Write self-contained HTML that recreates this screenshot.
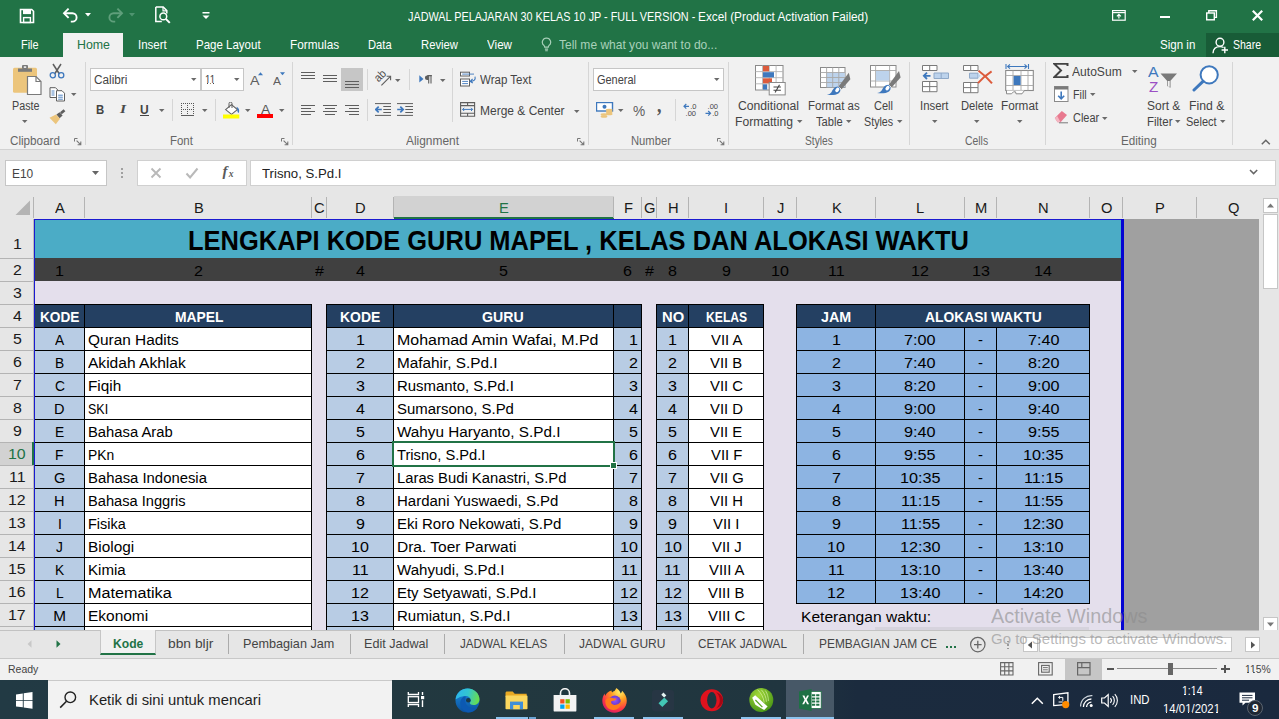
<!DOCTYPE html>
<html><head><meta charset="utf-8"><title>Excel</title>
<style>
html,body{margin:0;padding:0;}
body{width:1279px;height:719px;overflow:hidden;position:relative;background:#e6e6e6;font-family:"Liberation Sans",sans-serif;}
div,svg{position:absolute;box-sizing:border-box;}
.t{white-space:pre;}
</style></head><body>
<div style="left:0px;top:0px;width:1279px;height:57px;background:#217346;"></div>
<div style="left:63px;top:33px;width:60px;height:25px;background:#f1f1f1;"></div>
<div style="left:1206px;top:33px;width:73px;height:24px;background:#185c37;"></div>
<div class="t" style="left:407.5px;top:11px;font-size:12px;line-height:12px;color:#fff;transform:scaleX(0.9038);transform-origin:0 0;">JADWAL PELAJARAN 30 KELAS 10 JP - FULL VERSION -</div>
<div class="t" style="left:698.4px;top:11px;font-size:12px;line-height:12px;color:#fff;transform:scaleX(0.9847);transform-origin:0 0;">Excel (Product Activation Failed)</div>
<div class="t" style="left:20.6px;top:38px;font-size:13px;line-height:13px;color:#fff;transform:scaleX(0.8400);transform-origin:0 0;">File</div>
<div class="t" style="left:76.6px;top:38px;font-size:13px;line-height:13px;color:#217346;transform:scaleX(0.9514);transform-origin:0 0;">Home</div>
<div class="t" style="left:138px;top:38px;font-size:13px;line-height:13px;color:#fff;transform:scaleX(0.8857);transform-origin:0 0;">Insert</div>
<div class="t" style="left:196.4px;top:38px;font-size:13px;line-height:13px;color:#fff;transform:scaleX(0.8847);transform-origin:0 0;">Page Layout</div>
<div class="t" style="left:290.2px;top:38px;font-size:13px;line-height:13px;color:#fff;transform:scaleX(0.9061);transform-origin:0 0;">Formulas</div>
<div class="t" style="left:368.4px;top:38px;font-size:13px;line-height:13px;color:#fff;transform:scaleX(0.8592);transform-origin:0 0;">Data</div>
<div class="t" style="left:421.3px;top:38px;font-size:13px;line-height:13px;color:#fff;transform:scaleX(0.8657);transform-origin:0 0;">Review</div>
<div class="t" style="left:487px;top:38px;font-size:13px;line-height:13px;color:#fff;transform:scaleX(0.8944);transform-origin:0 0;">View</div>
<div class="t" style="left:558.5px;top:38px;font-size:13px;line-height:13px;color:#a9d1ba;transform:scaleX(0.9243);transform-origin:0 0;">Tell me what you want to do...</div>
<div class="t" style="left:1160px;top:38px;font-size:13px;line-height:13px;color:#fff;transform:scaleX(0.8881);transform-origin:0 0;">Sign in</div>
<div class="t" style="left:1232.6px;top:38px;font-size:13px;line-height:13px;color:#fff;transform:scaleX(0.8097);transform-origin:0 0;">Share</div>
<svg style="left:19px;top:8px;" width="16" height="16" viewBox="0 0 16 16"><path d="M1.5 1.5h11.2l1.8 1.8v11.2h-13z" fill="none" stroke="#fff" stroke-width="1.6"/><rect x="4" y="1.5" width="8" height="4.6" fill="#fff"/><rect x="4.6" y="9.6" width="6.8" height="4.9" fill="none" stroke="#fff" stroke-width="1.4"/></svg>
<svg style="left:61px;top:7px;" width="20" height="16" viewBox="0 0 20 16"><path d="M3.2 6.2h8.2a4.2 4.2 0 0 1 0 8.4h-1.6" fill="none" stroke="#fff" stroke-width="1.9"/><path d="M7.6 1.6L3 6.2l4.6 4.6" fill="none" stroke="#fff" stroke-width="1.9"/></svg>
<svg style="left:85px;top:13px;" width="7" height="4" viewBox="0 0 7 4"><path d="M0 0h6l-3 3.4z" fill="#fff"/></svg>
<svg style="left:105px;top:7px;" width="20" height="16" viewBox="0 0 20 16"><path d="M16.8 6.2H8.6a4.2 4.2 0 0 0 0 8.4h1.6" fill="none" stroke="#5f9f7b" stroke-width="1.9"/><path d="M12.4 1.6L17 6.2l-4.6 4.6" fill="none" stroke="#5f9f7b" stroke-width="1.9"/></svg>
<svg style="left:129px;top:13px;" width="7" height="4" viewBox="0 0 7 4"><path d="M0 0h6l-3 3.4z" fill="#4f9470"/></svg>
<svg style="left:154px;top:6px;" width="18" height="18" viewBox="0 0 18 18"><path d="M1.8 1h7.4l3.6 3.6v3M1.8 1v14.6h6" fill="none" stroke="#fff" stroke-width="1.5"/><path d="M9 1v3.8h3.8" fill="none" stroke="#fff" stroke-width="1.2"/><circle cx="9.3" cy="10.4" r="3.4" fill="none" stroke="#fff" stroke-width="1.5"/><path d="M11.8 12.9l4 4" stroke="#fff" stroke-width="2"/></svg>
<svg style="left:202px;top:11px;" width="9" height="9" viewBox="0 0 9 9"><rect x="0.5" y="1" width="7" height="1.5" fill="#fff"/><path d="M0.5 4.5h7l-3.5 3.6z" fill="#fff"/></svg>
<svg style="left:1112px;top:10px;" width="14" height="11" viewBox="0 0 14 11"><rect x="0.6" y="0.6" width="12.6" height="9.6" fill="none" stroke="#fff" stroke-width="1.2"/><path d="M0.6 2.6h12.6" stroke="#fff" stroke-width="1.2"/><path d="M6.9 8.6V4.6M4.9 6.4l2-2 2 2" fill="none" stroke="#fff" stroke-width="1.2"/></svg>
<div style="left:1159.5px;top:16px;width:10.5px;height:1.6px;background:#fff;"></div>
<svg style="left:1206px;top:10px;" width="12" height="11" viewBox="0 0 12 11"><rect x="0.7" y="3" width="7.6" height="6.8" fill="none" stroke="#fff" stroke-width="1.4"/><path d="M2.8 3V0.8h7.6v6.6H8.4" fill="none" stroke="#fff" stroke-width="1.4"/></svg>
<svg style="left:1251.5px;top:9.5px;" width="11" height="11" viewBox="0 0 11 11"><path d="M0.8 0.8l9.4 9.4M10.2 0.8L0.8 10.2" stroke="#fff" stroke-width="2.2"/></svg>
<svg style="left:541px;top:37px;" width="11" height="15" viewBox="0 0 11 15"><path d="M5.5 1a4.2 4.2 0 0 0-2.4 7.6c.4.4.6.9.6 1.6h3.6c0-.7.2-1.2.6-1.6A4.2 4.2 0 0 0 5.500 1z" fill="none" stroke="#a9d1ba" stroke-width="1.2"/><path d="M3.9 12.1h3.2M4.2 13.8h2.6" stroke="#a9d1ba" stroke-width="1.1"/></svg>
<svg style="left:1212px;top:36.5px;" width="17" height="17" viewBox="0 0 17 17"><circle cx="8" cy="5.200" r="3.900" fill="none" stroke="#fff" stroke-width="1.400"/><path d="M1 16.200c0.200-4.200 2.800-6.600 7-6.600 1.400 0 2.600 0.300 3.600 0.900" fill="none" stroke="#fff" stroke-width="1.400"/><path d="M12.800 9.800v6.400M9.600 13h6.400" stroke="#fff" stroke-width="1.400"/></svg>
<div style="left:0px;top:57px;width:1279px;height:92px;background:#f1f1f1;"></div>
<div style="left:0px;top:149px;width:1279px;height:1px;background:#d2d2d2;"></div>
<div style="left:5px;top:160px;width:102px;height:26px;background:#fff;border:1px solid #c6c6c6;"></div>
<div class="t" style="left:12.3px;top:168px;font-size:12px;line-height:12px;color:#444;transform:scaleX(0.9925);transform-origin:0 0;">E10</div>
<svg style="left:92px;top:171px;" width="8" height="5" viewBox="0 0 8 5"><path d="M0 0h7l-3.5 4z" fill="#666"/></svg>
<div style="left:121px;top:167.5px;width:2px;height:2px;background:#a0a0a0;"></div>
<div style="left:121px;top:171.8px;width:2px;height:2px;background:#a0a0a0;"></div>
<div style="left:121px;top:176px;width:2px;height:2px;background:#a0a0a0;"></div>
<div style="left:137px;top:160px;width:110px;height:26px;background:#fff;border:1px solid #d0d0d0;"></div>
<svg style="left:150px;top:167px;" width="12" height="12" viewBox="0 0 12 12"><path d="M1.5 1.5l9 9M10.5 1.5l-9 9" stroke="#b9b9b9" stroke-width="1.9"/></svg>
<svg style="left:185px;top:167px;" width="14" height="12" viewBox="0 0 14 12"><path d="M1.5 6.5l3.600 4L12.500 1.500" fill="none" stroke="#b9b9b9" stroke-width="2"/></svg>
<div class="t" style="left:222.500px;top:162px;font:italic 700 15px/18px 'Liberation Serif',serif;color:#5a5a5a;">f</div>
<div class="t" style="left:228.800px;top:168px;font:italic 700 9.500px/12px 'Liberation Serif',serif;color:#5a5a5a;">x</div>
<div style="left:250px;top:160px;width:1026px;height:26px;background:#fff;border:1px solid #d0d0d0;"></div>
<div class="t" style="left:262px;top:168px;font-size:12.5px;line-height:12.5px;color:#222;transform:scaleX(1.0563);transform-origin:0 0;">Trisno, S.Pd.I</div>
<svg style="left:1249px;top:169px;" width="10" height="7" viewBox="0 0 10 7"><path d="M1 1l3.600 3.600L8.200 1" fill="none" stroke="#666" stroke-width="1.5"/></svg>
<div style="left:84.9px;top:61.5px;width:1px;height:83px;background:#d6d6d6;"></div>
<div style="left:292.0px;top:61.5px;width:1px;height:83px;background:#d6d6d6;"></div>
<div style="left:588.1px;top:61.5px;width:1px;height:83px;background:#d6d6d6;"></div>
<div style="left:727.9px;top:61.5px;width:1px;height:83px;background:#d6d6d6;"></div>
<div style="left:909.0px;top:61.5px;width:1px;height:83px;background:#d6d6d6;"></div>
<div style="left:1045.1px;top:61.5px;width:1px;height:83px;background:#d6d6d6;"></div>
<div style="left:1232.0px;top:61.5px;width:1px;height:83px;background:#d6d6d6;"></div>
<div class="t" style="left:9.5px;top:135px;font-size:12px;line-height:12px;color:#666;transform:scaleX(0.9732);transform-origin:0 0;">Clipboard</div>
<div class="t" style="left:169.6px;top:135px;font-size:12px;line-height:12px;color:#666;transform:scaleX(0.9535);transform-origin:0 0;">Font</div>
<div class="t" style="left:406px;top:135px;font-size:12px;line-height:12px;color:#666;transform:scaleX(0.9930);transform-origin:0 0;">Alignment</div>
<div class="t" style="left:630.8px;top:135px;font-size:12px;line-height:12px;color:#666;transform:scaleX(0.9370);transform-origin:0 0;">Number</div>
<div class="t" style="left:804.5px;top:135px;font-size:12px;line-height:12px;color:#666;transform:scaleX(0.8505);transform-origin:0 0;">Styles</div>
<div class="t" style="left:965.4px;top:135px;font-size:12px;line-height:12px;color:#666;transform:scaleX(0.8661);transform-origin:0 0;">Cells</div>
<div class="t" style="left:1120.7px;top:135px;font-size:12px;line-height:12px;color:#666;transform:scaleX(0.9727);transform-origin:0 0;">Editing</div>
<svg style="left:74px;top:138px;" width="8" height="8" viewBox="0 0 8 8"><path d="M0.500 3.500V0.500h3" fill="none" stroke="#777" stroke-width="1"/><path d="M2.600 2.600l4 4M6.800 3.600v3.200H3.600" fill="none" stroke="#777" stroke-width="1.100"/></svg>
<svg style="left:281px;top:138px;" width="8" height="8" viewBox="0 0 8 8"><path d="M0.500 3.500V0.500h3" fill="none" stroke="#777" stroke-width="1"/><path d="M2.600 2.600l4 4M6.800 3.600v3.200H3.600" fill="none" stroke="#777" stroke-width="1.100"/></svg>
<svg style="left:576.7px;top:138px;" width="8" height="8" viewBox="0 0 8 8"><path d="M0.500 3.500V0.500h3" fill="none" stroke="#777" stroke-width="1"/><path d="M2.600 2.600l4 4M6.800 3.600v3.200H3.600" fill="none" stroke="#777" stroke-width="1.100"/></svg>
<svg style="left:717.3px;top:138px;" width="8" height="8" viewBox="0 0 8 8"><path d="M0.500 3.500V0.500h3" fill="none" stroke="#777" stroke-width="1"/><path d="M2.600 2.600l4 4M6.800 3.600v3.200H3.600" fill="none" stroke="#777" stroke-width="1.100"/></svg>
<svg style="left:1261px;top:138.5px;" width="10" height="6" viewBox="0 0 10 6"><path d="M0.800 5.200l4-4 4 4" fill="none" stroke="#666" stroke-width="1.500"/></svg>
<svg style="left:12px;top:64px;" width="30" height="32" viewBox="0 0 30 32"><rect x="1" y="3.800" width="24" height="25" rx="1.500" fill="#ecc57c"/><path d="M6 4.500h14v3.300H6z" fill="#7a7a7a"/><rect x="10" y="1" width="6" height="4" rx="1" fill="#7a7a7a"/><rect x="11.800" y="2.300" width="2.400" height="1.600" fill="#f1f1f1"/><path d="M15.500 12.500h8.500l5 5v13h-13.500z" fill="#fff" stroke="#7a7a7a" stroke-width="1.200"/><path d="M24 12.500v5h5" fill="none" stroke="#7a7a7a" stroke-width="1.200"/></svg>
<div class="t" style="left:11.5px;top:100px;font-size:12px;line-height:12px;color:#444;transform:scaleX(0.8961);transform-origin:0 0;">Paste</div>
<svg style="left:22px;top:120px;" width="6.0" height="3.5" viewBox="0 0 6.0 3.5"><path d="M0 0h5.5l-2.75 3z" fill="#6a6a6a"/></svg>
<svg style="left:49px;top:63px;" width="16" height="16" viewBox="0 0 16 16"><path d="M4 1l6.400 10M12 1L5.600 11" stroke="#5e5e5e" stroke-width="1.500"/><circle cx="3.800" cy="12.200" r="2.600" fill="none" stroke="#3e78bd" stroke-width="1.300"/><circle cx="12.200" cy="12.200" r="2.600" fill="none" stroke="#3e78bd" stroke-width="1.300"/></svg>
<svg style="left:48.5px;top:87px;" width="17" height="15" viewBox="0 0 17 15"><path d="M1 0.700h5.500l2.300 2.300v7.500H1z" fill="#fff" stroke="#5e5e5e" stroke-width="1"/><path d="M7.500 3.700h5.500l2.500 2.500v7.800h-8z" fill="#fff" stroke="#5e5e5e" stroke-width="1"/><path d="M2.500 4h3M2.500 6h3M2.500 8h3M9.200 8.200h4.600M9.200 10.200h4.600M9.200 12.200h4.600" stroke="#3e78bd" stroke-width="0.900"/></svg>
<svg style="left:71px;top:93px;" width="6.0" height="3.5" viewBox="0 0 6.0 3.5"><path d="M0 0h5.5l-2.75 3z" fill="#6a6a6a"/></svg>
<svg style="left:49px;top:109px;" width="17" height="16" viewBox="0 0 17 16"><path d="M11 3.200l3.600-3 1.800 2-3.600 3z" fill="#5e5e5e"/><path d="M7.400 5.600l3.200-2.400 3 3.400-3 2.600z" fill="#5e5e5e"/><path d="M0.500 8.800l6.500-3.400 4 4.400-4.200 5.400z" fill="#ecc57c"/></svg>
<div style="left:90px;top:68px;width:111px;height:23px;background:#fff;border:1px solid #c6c6c6;"></div>
<div style="left:201px;top:68px;width:43px;height:23px;background:#fff;border:1px solid #c6c6c6;"></div>
<div class="t" style="left:93.5px;top:74px;font-size:12px;line-height:12px;color:#444;transform:scaleX(0.9819);transform-origin:0 0;">Calibri</div>
<div class="t" style="left:204.9px;top:74px;font-size:12px;line-height:12px;color:#444;transform:scaleX(0.8100);transform-origin:0 0;">11</div>
<div style="left:205.09px;top:83px;width:2.09px;height:1.3px;background:#fff;"></div>
<div style="left:208.4px;top:83px;width:1.94px;height:1.3px;background:#fff;"></div>
<div style="left:210.51px;top:83px;width:2.09px;height:1.3px;background:#fff;"></div>
<div style="left:213.82px;top:83px;width:1.94px;height:1.3px;background:#fff;"></div>
<svg style="left:191px;top:78px;" width="6.0" height="3.5" viewBox="0 0 6.0 3.5"><path d="M0 0h5.5l-2.75 3z" fill="#6a6a6a"/></svg>
<svg style="left:233.6px;top:78px;" width="6.0" height="3.5" viewBox="0 0 6.0 3.5"><path d="M0 0h5.5l-2.75 3z" fill="#6a6a6a"/></svg>
<div class="t" style="left:250px;top:74px;font-size:13.5px;line-height:13.5px;color:#5e5e5e;transform:scaleX(1.0537);transform-origin:0 0;">A</div>
<svg style="left:258px;top:72px;" width="6" height="4" viewBox="0 0 6 4"><path d="M0 3.200h5L2.500 0.300z" fill="#3e78bd"/></svg>
<div class="t" style="left:273px;top:76px;font-size:11px;line-height:11px;color:#5e5e5e;transform:scaleX(1.0894);transform-origin:0 0;">A</div>
<svg style="left:280px;top:72px;" width="6" height="4" viewBox="0 0 6 4"><path d="M0 0.300h5L2.500 3.200z" fill="#3e78bd"/></svg>
<div class="t" style="left:96.2px;top:103px;font-size:13px;line-height:13px;color:#444;transform:scaleX(0.8732);transform-origin:0 0;font-weight:700;">B</div>
<div class="t" style="left:119.800px;top:101px;font:italic 700 13.500px/16px 'Liberation Serif',serif;color:#4a4a4a;transform:scaleX(1.15);transform-origin:0 0;">I</div>
<div class="t" style="left:140px;top:104px;font-size:12.5px;line-height:12.5px;color:#444;transform:scaleX(0.9633);transform-origin:0 0;font-weight:700;">U</div>
<div style="left:140px;top:115px;width:8.7px;height:1.2px;background:#444;"></div>
<svg style="left:158.6px;top:109px;" width="6.0" height="3.5" viewBox="0 0 6.0 3.5"><path d="M0 0h5.5l-2.75 3z" fill="#6a6a6a"/></svg>
<div style="left:172px;top:99px;width:1px;height:21.5px;background:#d6d6d6;"></div>
<svg style="left:181px;top:103px;" width="14" height="13" viewBox="0 0 14 13"><g fill="#555" shape-rendering="crispEdges"><rect x="0" y="0" width="1" height="1"/><rect x="0" y="2" width="1" height="1"/><rect x="0" y="4" width="1" height="1"/><rect x="0" y="6" width="1" height="1"/><rect x="0" y="8" width="1" height="1"/><rect x="0" y="10" width="1" height="1"/><rect x="2" y="0" width="1" height="1"/><rect x="2" y="6" width="1" height="1"/><rect x="4" y="0" width="1" height="1"/><rect x="4" y="6" width="1" height="1"/><rect x="6" y="0" width="1" height="1"/><rect x="6" y="2" width="1" height="1"/><rect x="6" y="4" width="1" height="1"/><rect x="6" y="6" width="1" height="1"/><rect x="6" y="8" width="1" height="1"/><rect x="6" y="10" width="1" height="1"/><rect x="8" y="0" width="1" height="1"/><rect x="8" y="6" width="1" height="1"/><rect x="10" y="0" width="1" height="1"/><rect x="10" y="6" width="1" height="1"/><rect x="12" y="0" width="1" height="1"/><rect x="12" y="2" width="1" height="1"/><rect x="12" y="4" width="1" height="1"/><rect x="12" y="6" width="1" height="1"/><rect x="12" y="8" width="1" height="1"/><rect x="12" y="10" width="1" height="1"/><rect x="0" y="12" width="13" height="1.200" fill="#5e5e5e"/></g></svg>
<svg style="left:201.6px;top:109px;" width="6.0" height="3.5" viewBox="0 0 6.0 3.5"><path d="M0 0h5.5l-2.75 3z" fill="#6a6a6a"/></svg>
<div style="left:215px;top:99px;width:1px;height:21.5px;background:#d6d6d6;"></div>
<svg style="left:222.8px;top:101.5px;" width="17" height="17" viewBox="0 0 17 17"><path d="M2.600 7.600l5.900-5 5.900 5-5.900 4.800z" fill="#fff" stroke="#5e5e5e" stroke-width="1.100"/><path d="M6 6V1.600a1.500 1.500 0 0 1 3 0V6" fill="none" stroke="#5e5e5e" stroke-width="1"/><path d="M13.400 4.800c2.600 1.200 3.400 3.600 2.400 6.200-1.200-0.600-1.800-2.200-1.400-3.600z" fill="#3e78bd"/><rect x="0" y="12.500" width="16.300" height="4" fill="#ffff00"/></svg>
<svg style="left:244.6px;top:109px;" width="6.0" height="3.5" viewBox="0 0 6.0 3.5"><path d="M0 0h5.5l-2.75 3z" fill="#6a6a6a"/></svg>
<div class="t" style="left:260.7px;top:103px;font-size:13.5px;line-height:13.5px;color:#555;transform:scaleX(1.0205);transform-origin:0 0;">A</div>
<div style="left:257px;top:114px;width:16px;height:4px;background:#ff0000;"></div>
<svg style="left:278.8px;top:109px;" width="6.0" height="3.5" viewBox="0 0 6.0 3.5"><path d="M0 0h5.5l-2.75 3z" fill="#6a6a6a"/></svg>
<div style="left:301px;top:71.5px;width:14px;height:1.1px;background:#5e5e5e;"></div>
<div style="left:301px;top:74.5px;width:14px;height:1.1px;background:#5e5e5e;"></div>
<div style="left:301px;top:77.5px;width:14px;height:1.1px;background:#5e5e5e;"></div>
<div style="left:323px;top:75.0px;width:14px;height:1.1px;background:#5e5e5e;"></div>
<div style="left:323px;top:78.0px;width:14px;height:1.1px;background:#5e5e5e;"></div>
<div style="left:323px;top:81.0px;width:14px;height:1.1px;background:#5e5e5e;"></div>
<div style="left:341px;top:68px;width:22px;height:23px;background:#c6c6c6;"></div>
<div style="left:345px;top:80.5px;width:14px;height:1.1px;background:#5e5e5e;"></div>
<div style="left:345px;top:83.5px;width:14px;height:1.1px;background:#5e5e5e;"></div>
<div style="left:345px;top:86.5px;width:14px;height:1.1px;background:#5e5e5e;"></div>
<div style="left:367px;top:68.5px;width:1px;height:21.5px;background:#d6d6d6;"></div>
<svg style="left:374px;top:70px;" width="18" height="17" viewBox="0 0 18 17"><text x="0" y="0" font-family="Liberation Sans" font-size="11.500" fill="#4a4a4a" transform="translate(4.600 12.600) rotate(-45) scale(0.92 1)">ab</text><path d="M7.400 15.400L16.400 6.400" stroke="#5e5e5e" stroke-width="1.100"/><path d="M12.600 6.200h4v4" fill="none" stroke="#5e5e5e" stroke-width="1.100"/></svg>
<svg style="left:395px;top:79px;" width="6.0" height="3.5" viewBox="0 0 6.0 3.5"><path d="M0 0h5.5l-2.75 3z" fill="#6a6a6a"/></svg>
<div style="left:409.2px;top:68.5px;width:1px;height:21.5px;background:#d6d6d6;"></div>
<svg style="left:418.5px;top:74.5px;" width="14" height="9" viewBox="0 0 14 9"><path d="M0.300 0.200v7.400l4.200-3.700z" fill="#3e78bd"/><path d="M8.300 0.600h4.600M9.700 0.600v8M12 0.600v8" stroke="#5e5e5e" stroke-width="1.100" fill="none"/><path d="M9.700 0.400H8.200a2.300 2.300 0 0 0 0 4.600H9.700z" fill="#5e5e5e"/></svg>
<svg style="left:439.5px;top:79px;" width="6.0" height="3.5" viewBox="0 0 6.0 3.5"><path d="M0 0h5.5l-2.75 3z" fill="#6a6a6a"/></svg>
<div style="left:452px;top:67.5px;width:1px;height:54px;background:#d6d6d6;"></div>
<svg style="left:460px;top:70.5px;" width="17" height="16" viewBox="0 0 17 16"><rect x="0.500" y="1.200" width="9" height="3.800" fill="#fff" stroke="#5e5e5e" stroke-width="1"/><rect x="0.500" y="8" width="9" height="7" fill="#fff" stroke="#5e5e5e" stroke-width="1"/><path d="M2.200 3.100H14M2.200 10.400h5.800M2.200 12.600h5.800" stroke="#3e78bd" stroke-width="0.900"/><path d="M15 5.600c0.800 3-1 4.800-4.600 4.800M12.600 8l-2.400 2.400 2.600 1.600" fill="none" stroke="#3e78bd" stroke-width="1.100"/></svg>
<div class="t" style="left:479.6px;top:74px;font-size:12px;line-height:12px;color:#444;transform:scaleX(0.9593);transform-origin:0 0;">Wrap Text</div>
<div style="left:301px;top:105.0px;width:14px;height:1.1px;background:#5e5e5e;"></div>
<div style="left:301px;top:108.0px;width:10px;height:1.1px;background:#5e5e5e;"></div>
<div style="left:301px;top:111.0px;width:14px;height:1.1px;background:#5e5e5e;"></div>
<div style="left:301px;top:114.0px;width:10px;height:1.1px;background:#5e5e5e;"></div>
<div style="left:323.0px;top:105.0px;width:14px;height:1.1px;background:#5e5e5e;"></div>
<div style="left:325.0px;top:108.0px;width:10px;height:1.1px;background:#5e5e5e;"></div>
<div style="left:323.0px;top:111.0px;width:14px;height:1.1px;background:#5e5e5e;"></div>
<div style="left:325.0px;top:114.0px;width:10px;height:1.1px;background:#5e5e5e;"></div>
<div style="left:345px;top:105.0px;width:14px;height:1.1px;background:#5e5e5e;"></div>
<div style="left:349px;top:108.0px;width:10px;height:1.1px;background:#5e5e5e;"></div>
<div style="left:345px;top:111.0px;width:14px;height:1.1px;background:#5e5e5e;"></div>
<div style="left:349px;top:114.0px;width:10px;height:1.1px;background:#5e5e5e;"></div>
<div style="left:367px;top:99px;width:1px;height:22px;background:#d6d6d6;"></div>
<svg style="left:375px;top:103px;" width="17" height="13" viewBox="0 0 17 13"><path d="M0 0.600h16M8.300 3.500h7.700M8.300 6.500h7.700M8.300 9.500h7.700M0 12.400h16" stroke="#5e5e5e" stroke-width="1"/><path d="M6.800 6.500H1.400M3.700 3.600L0.800 6.500l2.900 2.900" fill="none" stroke="#3e78bd" stroke-width="1.700"/></svg>
<svg style="left:397px;top:103px;" width="17" height="13" viewBox="0 0 17 13"><path d="M0 0.600h16M8.300 3.500h7.700M8.300 6.500h7.700M8.300 9.500h7.700M0 12.400h16" stroke="#5e5e5e" stroke-width="1"/><path d="M0.200 6.500h5.400M3.300 3.600l2.900 2.900-2.900 2.900" fill="none" stroke="#3e78bd" stroke-width="1.700"/></svg>
<svg style="left:460px;top:102px;" width="16" height="15" viewBox="0 0 16 15"><path d="M0.600 0.600h14v13.600H0.600zM0.600 3.600h14M0.600 11.200h14M7.600 0.600v3M7.600 11.200v3" fill="none" stroke="#5e5e5e" stroke-width="1.100"/><path d="M2.600 7.400h10M4.200 5.800L2.600 7.400l1.600 1.600M11 5.800l1.600 1.600-1.600 1.600" fill="none" stroke="#3e78bd" stroke-width="1"/></svg>
<div class="t" style="left:479.6px;top:105px;font-size:12px;line-height:12px;color:#444;transform:scaleX(0.9988);transform-origin:0 0;">Merge &amp; Center</div>
<svg style="left:574.2px;top:110px;" width="6.0" height="3.5" viewBox="0 0 6.0 3.5"><path d="M0 0h5.5l-2.75 3z" fill="#6a6a6a"/></svg>
<div style="left:593px;top:68px;width:131px;height:23px;background:#fff;border:1px solid #c6c6c6;"></div>
<div class="t" style="left:596.8px;top:74px;font-size:12px;line-height:12px;color:#444;transform:scaleX(0.9133);transform-origin:0 0;">General</div>
<svg style="left:713.7px;top:78px;" width="6.0" height="3.5" viewBox="0 0 6.0 3.5"><path d="M0 0h5.5l-2.75 3z" fill="#6a6a6a"/></svg>
<svg style="left:595.5px;top:102px;" width="18" height="17" viewBox="0 0 18 17"><rect x="0.500" y="0.500" width="16" height="8.500" fill="#fff" stroke="#3e78bd" stroke-width="1.400"/><circle cx="8.500" cy="4.800" r="2" fill="#3e78bd"/><ellipse cx="13.200" cy="8" rx="3.400" ry="1.300" fill="#ecc57c"/><ellipse cx="13.200" cy="10" rx="3.400" ry="1.300" fill="#ecc57c"/><ellipse cx="13.200" cy="12" rx="3.400" ry="1.300" fill="#ecc57c"/><ellipse cx="8" cy="12.500" rx="3.400" ry="1.300" fill="#ecc57c"/><ellipse cx="8" cy="14.500" rx="3.400" ry="1.300" fill="#ecc57c"/></svg>
<svg style="left:618px;top:109px;" width="6.0" height="3.5" viewBox="0 0 6.0 3.5"><path d="M0 0h5.5l-2.75 3z" fill="#6a6a6a"/></svg>
<div class="t" style="left:632.6px;top:104px;font-size:14.5px;line-height:14.5px;color:#5e5e5e;transform:scaleX(0.9453);transform-origin:0 0;">%</div>
<div class="t" style="left:657px;top:94px;font-size:22px;line-height:22px;color:#555;transform:scaleX(0.8163);transform-origin:0 0;font-weight:700;font-family:'Liberation Serif',serif;">,</div>
<div style="left:675px;top:99px;width:1px;height:22px;background:#d6d6d6;"></div>
<svg style="left:683px;top:103px;" width="15" height="14" viewBox="0 0 15 14"><path d="M6 3.300H1M3.300 1L1 3.300l2.300 2.300" fill="none" stroke="#3e78bd" stroke-width="1.200"/><text x="7.200" y="6" font-family="Liberation Sans" font-size="7.500" fill="#444">.0</text><text x="2.600" y="13" font-family="Liberation Sans" font-size="7.500" fill="#444">.00</text></svg>
<svg style="left:705px;top:103px;" width="15" height="14" viewBox="0 0 15 14"><text x="2.600" y="6" font-family="Liberation Sans" font-size="7.500" fill="#444">.00</text><path d="M0.500 10.300h5M3.200 8l2.300 2.300-2.300 2.300" fill="none" stroke="#3e78bd" stroke-width="1.200"/><text x="7.200" y="13" font-family="Liberation Sans" font-size="7.500" fill="#444">.0</text></svg>
<svg style="left:755px;top:64.5px;" width="32" height="31" viewBox="0 0 32 31"><rect x="0.500" y="0.500" width="27.500" height="24.500" fill="#fff" stroke="#8a8a8a" stroke-width="1"/><path d="M7.500 0.500v24.500M14.300 0.500v24.500M21.100 0.500v24.500M0.500 6.600h27.500M0.500 12.700h27.500M0.500 18.800h27.500" stroke="#b4b4b4" stroke-width="0.900"/><rect x="8" y="1" width="6" height="5.300" fill="#dc5b3c"/><rect x="8" y="7.200" width="11" height="5.200" fill="#3e78bd"/><rect x="8" y="13.300" width="9" height="5" fill="#dc5b3c"/><rect x="8" y="19.300" width="4.200" height="5.300" fill="#3e78bd"/><rect x="14.200" y="17.500" width="16" height="12.400" fill="#fff" stroke="#8a8a8a" stroke-width="1"/><path d="M18.500 22h7.400M18.500 25.300h7.400M24.500 19.800l-4.400 7.700" stroke="#444" stroke-width="1.100"/></svg>
<div class="t" style="left:738.4px;top:100px;font-size:12px;line-height:12px;color:#444;transform:scaleX(1.0142);transform-origin:0 0;">Conditional</div>
<div class="t" style="left:735.4px;top:116px;font-size:12px;line-height:12px;color:#444;transform:scaleX(1.0094);transform-origin:0 0;">Formatting</div>
<svg style="left:797px;top:119.8px;" width="6.0" height="3.5" viewBox="0 0 6.0 3.5"><path d="M0 0h5.5l-2.75 3z" fill="#6a6a6a"/></svg>
<svg style="left:820px;top:67px;" width="31" height="29" viewBox="0 0 31 29"><rect x="0.500" y="0.500" width="24.500" height="20" fill="#fff" stroke="#8a8a8a" stroke-width="1"/><rect x="6.800" y="5.600" width="18" height="14.700" fill="#bdd3ec"/><path d="M6.600 0.500v20M12.700 0.500v20M18.800 0.500v20M0.500 5.500h24.500M0.500 10.500h24.500M0.500 15.500h24.500" stroke="#a8a8a8" stroke-width="0.900"/><path d="M28.800 5.800l1.600 6.400-9 10.200-3-2.600z" fill="#7a7a7a"/><path d="M21.400 22.400l-3-2.600" stroke="#fff" stroke-width="1"/><path d="M18 19.600c-3.400 0.200-5 2.600-6.400 5.400-1 1.600-2.800 2.600-4.800 2.800 5 0.400 9.600 0.200 12-1.600 2-1.600 2.600-4.400-0.800-6.600z" fill="#3e78bd"/><ellipse cx="17.300" cy="22.900" rx="1.700" ry="2.500" transform="rotate(40 17.300 22.900)" fill="#fff"/></svg>
<div class="t" style="left:807.5px;top:100px;font-size:12px;line-height:12px;color:#444;transform:scaleX(0.9571);transform-origin:0 0;">Format as</div>
<div class="t" style="left:816.4px;top:116px;font-size:12px;line-height:12px;color:#444;transform:scaleX(0.9272);transform-origin:0 0;">Table</div>
<svg style="left:846px;top:119.8px;" width="6.0" height="3.5" viewBox="0 0 6.0 3.5"><path d="M0 0h5.5l-2.75 3z" fill="#6a6a6a"/></svg>
<svg style="left:870px;top:64.5px;" width="31" height="30" viewBox="0 0 31 30"><rect x="0.500" y="0.500" width="25.500" height="21.500" fill="#fff" stroke="#8a8a8a" stroke-width="1"/><path d="M5.600 0.500v21.500M19.600 0.500v21.500M0.500 5.500h25.500M0.500 16h25.500" stroke="#a8a8a8" stroke-width="0.900"/><rect x="6" y="6" width="13.200" height="9.600" fill="#bdd3ec"/><path d="M29 6l1.600 6.400-9 10.200-3-2.600z" fill="#7a7a7a"/><path d="M21.600 22.600l-3-2.600" stroke="#fff" stroke-width="1"/><path d="M18.200 19.800c-3.400 0.200-5 2.600-6.400 5.400-1 1.600-2.800 2.600-4.800 2.800 5 0.400 9.600 0.200 12-1.600 2-1.600 2.600-4.400-0.800-6.600z" fill="#3e78bd"/><ellipse cx="17.500" cy="23.100" rx="1.700" ry="2.500" transform="rotate(40 17.500 23.100)" fill="#fff"/></svg>
<div class="t" style="left:873.6px;top:100px;font-size:12px;line-height:12px;color:#444;transform:scaleX(0.9191);transform-origin:0 0;">Cell</div>
<div class="t" style="left:864.4px;top:116px;font-size:12px;line-height:12px;color:#444;transform:scaleX(0.8933);transform-origin:0 0;">Styles</div>
<svg style="left:897px;top:119.8px;" width="6.0" height="3.5" viewBox="0 0 6.0 3.5"><path d="M0 0h5.5l-2.75 3z" fill="#6a6a6a"/></svg>
<svg style="left:921.5px;top:65px;" width="28" height="28" viewBox="0 0 28 28"><path d="M0.500 0.500h14.500v5H0.500zM7.700 0.500v5" fill="#fff" stroke="#7a7a7a" stroke-width="1"/><path d="M12 8h14.500v5.500H12zM19.200 8v5.500" fill="#bdd3ec" stroke="#8fa9c8" stroke-width="1"/><path d="M8.500 10.800H2M5 7.600L1.800 10.800 5 14" fill="none" stroke="#3e78bd" stroke-width="1.800"/><path d="M0.500 16.500h14.500v10.200H0.500zM7.700 16.500v10.200M0.500 21.600h14.500" fill="#fff" stroke="#7a7a7a" stroke-width="1"/></svg>
<div class="t" style="left:920.4px;top:100px;font-size:12px;line-height:12px;color:#444;transform:scaleX(0.9495);transform-origin:0 0;">Insert</div>
<svg style="left:932px;top:120.2px;" width="6.0" height="3.5" viewBox="0 0 6.0 3.5"><path d="M0 0h5.5l-2.75 3z" fill="#6a6a6a"/></svg>
<svg style="left:963px;top:65px;" width="31" height="29" viewBox="0 0 31 29"><path d="M0.500 0.500h14.500v5H0.500zM7.700 0.500v5" fill="#fff" stroke="#7a7a7a" stroke-width="1"/><path d="M6.500 8.200h8.500v5H6.500z" fill="#bdd3ec" stroke="#8fa9c8" stroke-width="1"/><path d="M15 8.200l2.600 2.500-2.600 2.500z" fill="#bdd3ec"/><path d="M0.500 17.500h14.500v10.200H0.500zM7.700 17.500v10.200M0.500 22.600h14.500" fill="#fff" stroke="#7a7a7a" stroke-width="1"/><path d="M15.500 5.800C20 9 25 13.600 29 18.400M28.600 6.400C24 9.400 19 13.600 15 18.200" fill="none" stroke="#dc5b3c" stroke-width="2"/></svg>
<div class="t" style="left:960.7px;top:100px;font-size:12px;line-height:12px;color:#444;transform:scaleX(0.9312);transform-origin:0 0;">Delete</div>
<svg style="left:974px;top:120.2px;" width="6.0" height="3.5" viewBox="0 0 6.0 3.5"><path d="M0 0h5.5l-2.75 3z" fill="#6a6a6a"/></svg>
<svg style="left:1004.5px;top:63px;" width="30" height="32" viewBox="0 0 30 32"><path d="M1 1v5M23.500 1v5M2.500 3.500h19.500M5 1.300L2.600 3.500 5 5.700M19.500 1.300l2.400 2.200-2.400 2.200" fill="none" stroke="#3e78bd" stroke-width="1.100"/><rect x="0.700" y="7.500" width="27.600" height="20" fill="#fff" stroke="#8a8a8a" stroke-width="1.100"/><path d="M8 7.500v20M16 7.500v20M23 7.500v20M0.700 12.500h27.600M0.700 22.500h27.600" stroke="#a8a8a8" stroke-width="0.900"/><rect x="8.600" y="13" width="7" height="9" fill="#3e78bd"/><path d="M1.500 27.500v3.300h5l2-2h2l0.500 2h6l2.500-3.300" fill="#fff" stroke="#8a8a8a" stroke-width="1"/></svg>
<div class="t" style="left:1000.8px;top:100px;font-size:12px;line-height:12px;color:#444;transform:scaleX(0.9785);transform-origin:0 0;">Format</div>
<svg style="left:1017px;top:120.2px;" width="6.0" height="3.5" viewBox="0 0 6.0 3.5"><path d="M0 0h5.5l-2.75 3z" fill="#6a6a6a"/></svg>
<svg style="left:1053px;top:63px;" width="16" height="15" viewBox="0 0 16 15"><path d="M14.500 3V0.800H1.200L8 7.400 1.200 14.200h13.300V12" fill="none" stroke="#444" stroke-width="2"/></svg>
<div class="t" style="left:1072px;top:66px;font-size:12px;line-height:12px;color:#444;transform:scaleX(1.0069);transform-origin:0 0;">AutoSum</div>
<svg style="left:1132px;top:70.2px;" width="6.0" height="3.5" viewBox="0 0 6.0 3.5"><path d="M0 0h5.5l-2.75 3z" fill="#6a6a6a"/></svg>
<svg style="left:1054px;top:86px;" width="15" height="16" viewBox="0 0 15 16"><rect x="0.500" y="0.500" width="13.500" height="15" fill="#fff" stroke="#8a8a8a" stroke-width="1"/><rect x="0.500" y="0.500" width="13.500" height="3" fill="#7a7a7a"/><path d="M7.200 5.500v7M4.200 9.800l3 3 3-3" fill="none" stroke="#3e78bd" stroke-width="1.600"/></svg>
<div class="t" style="left:1072.7px;top:89px;font-size:12px;line-height:12px;color:#444;transform:scaleX(0.8938);transform-origin:0 0;">Fill</div>
<svg style="left:1090px;top:93.2px;" width="6.0" height="3.5" viewBox="0 0 6.0 3.5"><path d="M0 0h5.5l-2.75 3z" fill="#6a6a6a"/></svg>
<svg style="left:1054px;top:110px;" width="15" height="14" viewBox="0 0 15 14"><path d="M0.800 8l7-7 5.200 4-6.400 7.200h-3z" fill="#e8798f"/><path d="M0.800 8l2.800 4.200h3L3.200 6z" fill="#f4b6c2"/><path d="M5 12.800h9" stroke="#7a7a7a" stroke-width="1"/></svg>
<div class="t" style="left:1072.7px;top:112px;font-size:12px;line-height:12px;color:#444;transform:scaleX(0.9133);transform-origin:0 0;">Clear</div>
<svg style="left:1101.7px;top:116.7px;" width="6.0" height="3.5" viewBox="0 0 6.0 3.5"><path d="M0 0h5.5l-2.75 3z" fill="#6a6a6a"/></svg>
<div class="t" style="left:1148.4px;top:64px;font-size:15px;line-height:15px;color:#3e78bd;transform:scaleX(1.0583);transform-origin:0 0;">A</div>
<div class="t" style="left:1149px;top:79px;font-size:15px;line-height:15px;color:#9b4fc4;transform:scaleX(1.0140);transform-origin:0 0;">Z</div>
<svg style="left:1160px;top:73px;" width="18" height="16" viewBox="0 0 18 16"><path d="M0.500 0.500h16.500l-6.500 7.200v7l-3.500-1.600v-5.400z" fill="#7a7a7a"/><rect x="7.700" y="8" width="2" height="5.800" fill="#f1f1f1"/></svg>
<div class="t" style="left:1146.5px;top:100px;font-size:12px;line-height:12px;color:#444;transform:scaleX(0.9982);transform-origin:0 0;">Sort &amp;</div>
<div class="t" style="left:1146.5px;top:116px;font-size:12px;line-height:12px;color:#444;transform:scaleX(0.9561);transform-origin:0 0;">Filter</div>
<svg style="left:1174.6px;top:120px;" width="6.0" height="3.5" viewBox="0 0 6.0 3.5"><path d="M0 0h5.5l-2.75 3z" fill="#6a6a6a"/></svg>
<svg style="left:1192px;top:64px;" width="28" height="28" viewBox="0 0 28 28"><circle cx="17.200" cy="10.800" r="8.600" fill="#fff" stroke="#3e78bd" stroke-width="2"/><path d="M11 17.400L2 26" stroke="#3e78bd" stroke-width="3" stroke-linecap="round"/></svg>
<div class="t" style="left:1188.6px;top:100px;font-size:12px;line-height:12px;color:#444;transform:scaleX(1.0205);transform-origin:0 0;">Find &amp;</div>
<div class="t" style="left:1186.4px;top:116px;font-size:12px;line-height:12px;color:#444;transform:scaleX(0.9173);transform-origin:0 0;">Select</div>
<svg style="left:1219.8px;top:120px;" width="6.0" height="3.5" viewBox="0 0 6.0 3.5"><path d="M0 0h5.5l-2.75 3z" fill="#6a6a6a"/></svg>
<div style="left:0px;top:195px;width:1279px;height:435px;background:#e6e6e6;"></div>
<svg style="left:15px;top:200px;" width="16" height="16" viewBox="0 0 16 16"><path d="M15 0.5V15H0.5z" fill="#b4b4b4"/></svg>
<div style="left:393.5px;top:196px;width:220.5px;height:23px;background:#d2d2d2;border-bottom:2px solid #217346;"></div>
<div class="t" style="left:55.08671875px;top:200px;font-size:15.5px;line-height:15.5px;color:#1a1a1a;transform:scaleX(0.9500);transform-origin:0 0;">A</div>
<div style="left:84px;top:197px;width:1px;height:21px;background:#b4b4b4;"></div>
<div class="t" style="left:193.58671875px;top:200px;font-size:15.5px;line-height:15.5px;color:#1a1a1a;transform:scaleX(0.9500);transform-origin:0 0;">B</div>
<div style="left:311px;top:197px;width:1px;height:21px;background:#b4b4b4;"></div>
<div class="t" style="left:314.178515625px;top:200px;font-size:15.5px;line-height:15.5px;color:#1a1a1a;transform:scaleX(0.9500);transform-origin:0 0;">C</div>
<div style="left:326px;top:197px;width:1px;height:21px;background:#b4b4b4;"></div>
<div class="t" style="left:355.178515625px;top:200px;font-size:15.5px;line-height:15.5px;color:#1a1a1a;transform:scaleX(0.9500);transform-origin:0 0;">D</div>
<div style="left:393px;top:197px;width:1px;height:21px;background:#b4b4b4;"></div>
<div class="t" style="left:499.08671875px;top:200px;font-size:15.5px;line-height:15.5px;color:#217346;transform:scaleX(0.9500);transform-origin:0 0;">E</div>
<div style="left:613px;top:197px;width:1px;height:21px;background:#b4b4b4;"></div>
<div class="t" style="left:623.50234375px;top:200px;font-size:15.5px;line-height:15.5px;color:#1a1a1a;transform:scaleX(0.9500);transform-origin:0 0;">F</div>
<div style="left:641px;top:197px;width:1px;height:21px;background:#b4b4b4;"></div>
<div class="t" style="left:643.7703125px;top:200px;font-size:15.5px;line-height:15.5px;color:#1a1a1a;transform:scaleX(0.9500);transform-origin:0 0;">G</div>
<div style="left:656px;top:197px;width:1px;height:21px;background:#b4b4b4;"></div>
<div class="t" style="left:667.678515625px;top:200px;font-size:15.5px;line-height:15.5px;color:#1a1a1a;transform:scaleX(0.9500);transform-origin:0 0;">H</div>
<div style="left:688px;top:197px;width:1px;height:21px;background:#b4b4b4;"></div>
<div class="t" style="left:724.4515625px;top:200px;font-size:15.5px;line-height:15.5px;color:#1a1a1a;transform:scaleX(0.9500);transform-origin:0 0;">I</div>
<div style="left:763px;top:197px;width:1px;height:21px;background:#b4b4b4;"></div>
<div class="t" style="left:776.81875px;top:200px;font-size:15.5px;line-height:15.5px;color:#1a1a1a;transform:scaleX(0.9500);transform-origin:0 0;">J</div>
<div style="left:796px;top:197px;width:1px;height:21px;background:#b4b4b4;"></div>
<div class="t" style="left:831.58671875px;top:200px;font-size:15.5px;line-height:15.5px;color:#1a1a1a;transform:scaleX(0.9500);transform-origin:0 0;">K</div>
<div style="left:875px;top:197px;width:1px;height:21px;background:#b4b4b4;"></div>
<div class="t" style="left:916.403125px;top:200px;font-size:15.5px;line-height:15.5px;color:#1a1a1a;transform:scaleX(0.9500);transform-origin:0 0;">L</div>
<div style="left:964px;top:197px;width:1px;height:21px;background:#b4b4b4;"></div>
<div class="t" style="left:974.862109375px;top:200px;font-size:15.5px;line-height:15.5px;color:#1a1a1a;transform:scaleX(0.9500);transform-origin:0 0;">M</div>
<div style="left:996px;top:197px;width:1px;height:21px;background:#b4b4b4;"></div>
<div class="t" style="left:1038.178515625px;top:200px;font-size:15.5px;line-height:15.5px;color:#1a1a1a;transform:scaleX(0.9500);transform-origin:0 0;">N</div>
<div style="left:1089px;top:197px;width:1px;height:21px;background:#b4b4b4;"></div>
<div class="t" style="left:1100.7703125px;top:200px;font-size:15.5px;line-height:15.5px;color:#1a1a1a;transform:scaleX(0.9500);transform-origin:0 0;">O</div>
<div style="left:1122px;top:197px;width:1px;height:21px;background:#b4b4b4;"></div>
<div class="t" style="left:1155.08671875px;top:200px;font-size:15.5px;line-height:15.5px;color:#1a1a1a;transform:scaleX(0.9500);transform-origin:0 0;">P</div>
<div style="left:1196px;top:197px;width:1px;height:21px;background:#b4b4b4;"></div>
<div class="t" style="left:1228.2703125px;top:200px;font-size:15.5px;line-height:15.5px;color:#1a1a1a;transform:scaleX(0.9500);transform-origin:0 0;">Q</div>
<div style="left:1270px;top:197px;width:1px;height:21px;background:#b4b4b4;"></div>
<div style="left:33px;top:197px;width:1px;height:21px;background:#b4b4b4;"></div>
<div style="left:0px;top:442px;width:34px;height:23px;background:#d2d2d2;border-right:2px solid #217346;"></div>
<div class="t" style="left:12.771874999999998px;top:236px;font-size:15.3px;line-height:15.3px;color:#1a1a1a;transform:scaleX(1.0400);transform-origin:0 0;">1</div>
<div style="left:0px;top:258px;width:33px;height:1px;background:#b4b4b4;"></div>
<div class="t" style="left:12.771874999999998px;top:262px;font-size:15.3px;line-height:15.3px;color:#1a1a1a;transform:scaleX(1.0400);transform-origin:0 0;">2</div>
<div style="left:0px;top:281px;width:33px;height:1px;background:#b4b4b4;"></div>
<div class="t" style="left:12.771874999999998px;top:285px;font-size:15.3px;line-height:15.3px;color:#1a1a1a;transform:scaleX(1.0400);transform-origin:0 0;">3</div>
<div style="left:0px;top:304px;width:33px;height:1px;background:#b4b4b4;"></div>
<div class="t" style="left:12.771874999999998px;top:308px;font-size:15.3px;line-height:15.3px;color:#1a1a1a;transform:scaleX(1.0400);transform-origin:0 0;">4</div>
<div style="left:0px;top:327px;width:33px;height:1px;background:#b4b4b4;"></div>
<div class="t" style="left:12.771874999999998px;top:331px;font-size:15.3px;line-height:15.3px;color:#1a1a1a;transform:scaleX(1.0400);transform-origin:0 0;">5</div>
<div style="left:0px;top:350px;width:33px;height:1px;background:#b4b4b4;"></div>
<div class="t" style="left:12.771874999999998px;top:354px;font-size:15.3px;line-height:15.3px;color:#1a1a1a;transform:scaleX(1.0400);transform-origin:0 0;">6</div>
<div style="left:0px;top:373px;width:33px;height:1px;background:#b4b4b4;"></div>
<div class="t" style="left:12.771874999999998px;top:377px;font-size:15.3px;line-height:15.3px;color:#1a1a1a;transform:scaleX(1.0400);transform-origin:0 0;">7</div>
<div style="left:0px;top:396px;width:33px;height:1px;background:#b4b4b4;"></div>
<div class="t" style="left:12.771874999999998px;top:400px;font-size:15.3px;line-height:15.3px;color:#1a1a1a;transform:scaleX(1.0400);transform-origin:0 0;">8</div>
<div style="left:0px;top:419px;width:33px;height:1px;background:#b4b4b4;"></div>
<div class="t" style="left:12.771874999999998px;top:423px;font-size:15.3px;line-height:15.3px;color:#1a1a1a;transform:scaleX(1.0400);transform-origin:0 0;">9</div>
<div style="left:0px;top:442px;width:33px;height:1px;background:#b4b4b4;"></div>
<div class="t" style="left:8.351875px;top:446px;font-size:15.3px;line-height:15.3px;color:#217346;transform:scaleX(1.0400);transform-origin:0 0;">10</div>
<div style="left:0px;top:465px;width:33px;height:1px;background:#b4b4b4;"></div>
<div class="t" style="left:8.936874999999999px;top:469px;font-size:15.3px;line-height:15.3px;color:#1a1a1a;transform:scaleX(1.0400);transform-origin:0 0;">11</div>
<div style="left:0px;top:488px;width:33px;height:1px;background:#b4b4b4;"></div>
<div class="t" style="left:8.351875px;top:492px;font-size:15.3px;line-height:15.3px;color:#1a1a1a;transform:scaleX(1.0400);transform-origin:0 0;">12</div>
<div style="left:0px;top:511px;width:33px;height:1px;background:#b4b4b4;"></div>
<div class="t" style="left:8.351875px;top:515px;font-size:15.3px;line-height:15.3px;color:#1a1a1a;transform:scaleX(1.0400);transform-origin:0 0;">13</div>
<div style="left:0px;top:534px;width:33px;height:1px;background:#b4b4b4;"></div>
<div class="t" style="left:8.351875px;top:538px;font-size:15.3px;line-height:15.3px;color:#1a1a1a;transform:scaleX(1.0400);transform-origin:0 0;">14</div>
<div style="left:0px;top:557px;width:33px;height:1px;background:#b4b4b4;"></div>
<div class="t" style="left:8.351875px;top:561px;font-size:15.3px;line-height:15.3px;color:#1a1a1a;transform:scaleX(1.0400);transform-origin:0 0;">15</div>
<div style="left:0px;top:580px;width:33px;height:1px;background:#b4b4b4;"></div>
<div class="t" style="left:8.351875px;top:584px;font-size:15.3px;line-height:15.3px;color:#1a1a1a;transform:scaleX(1.0400);transform-origin:0 0;">16</div>
<div style="left:0px;top:603px;width:33px;height:1px;background:#b4b4b4;"></div>
<div class="t" style="left:8.351875px;top:607px;font-size:15.3px;line-height:15.3px;color:#1a1a1a;transform:scaleX(1.0400);transform-origin:0 0;">17</div>
<div style="left:0px;top:626px;width:33px;height:1px;background:#b4b4b4;"></div>
<div style="left:0px;top:649px;width:33px;height:1px;background:#b4b4b4;"></div>
<div style="left:33px;top:219px;width:1px;height:411px;background:#b9b9b9;"></div>
<div style="left:32px;top:442px;width:2px;height:23px;background:#217346;"></div>
<div style="left:34px;top:219px;width:1089px;height:411px;background:#e4dfec;"></div>
<div style="left:34px;top:219px;width:1089px;height:39px;background:#4bacc6;"></div>
<div style="left:34px;top:258px;width:1089px;height:23px;background:#404040;"></div>
<div style="left:1124px;top:219px;width:135px;height:411px;background:#a0a0a0;"></div>
<div class="t" style="left:188px;top:227px;font-size:28px;line-height:28px;color:#000;transform:scaleX(0.9095);transform-origin:0 0;font-weight:700;">LENGKAPI KODE GURU MAPEL , KELAS DAN ALOKASI WAKTU</div>
<div class="t" style="left:55.029296875px;top:263px;font-size:15.3px;line-height:15.3px;color:#000;transform:scaleX(1.0500);transform-origin:0 0;">1</div>
<div class="t" style="left:193.529296875px;top:263px;font-size:15.3px;line-height:15.3px;color:#000;transform:scaleX(1.0500);transform-origin:0 0;">2</div>
<div class="t" style="left:314.529296875px;top:263px;font-size:15.3px;line-height:15.3px;color:#000;transform:scaleX(1.0500);transform-origin:0 0;">#</div>
<div class="t" style="left:355.529296875px;top:263px;font-size:15.3px;line-height:15.3px;color:#000;transform:scaleX(1.0500);transform-origin:0 0;">4</div>
<div class="t" style="left:499.029296875px;top:263px;font-size:15.3px;line-height:15.3px;color:#000;transform:scaleX(1.0500);transform-origin:0 0;">5</div>
<div class="t" style="left:623.029296875px;top:263px;font-size:15.3px;line-height:15.3px;color:#000;transform:scaleX(1.0500);transform-origin:0 0;">6</div>
<div class="t" style="left:644.529296875px;top:263px;font-size:15.3px;line-height:15.3px;color:#000;transform:scaleX(1.0500);transform-origin:0 0;">#</div>
<div class="t" style="left:668.029296875px;top:263px;font-size:15.3px;line-height:15.3px;color:#000;transform:scaleX(1.0500);transform-origin:0 0;">8</div>
<div class="t" style="left:721.529296875px;top:263px;font-size:15.3px;line-height:15.3px;color:#000;transform:scaleX(1.0500);transform-origin:0 0;">9</div>
<div class="t" style="left:771.066796875px;top:263px;font-size:15.3px;line-height:15.3px;color:#000;transform:scaleX(1.0500);transform-origin:0 0;">10</div>
<div class="t" style="left:827.657421875px;top:263px;font-size:15.3px;line-height:15.3px;color:#000;transform:scaleX(1.0500);transform-origin:0 0;">11</div>
<div class="t" style="left:911.066796875px;top:263px;font-size:15.3px;line-height:15.3px;color:#000;transform:scaleX(1.0500);transform-origin:0 0;">12</div>
<div class="t" style="left:971.566796875px;top:263px;font-size:15.3px;line-height:15.3px;color:#000;transform:scaleX(1.0500);transform-origin:0 0;">13</div>
<div class="t" style="left:1034.066796875px;top:263px;font-size:15.3px;line-height:15.3px;color:#000;transform:scaleX(1.0500);transform-origin:0 0;">14</div>
<div style="left:34px;top:304px;width:277px;height:23px;background:#244062;"></div>
<div style="left:34px;top:327px;width:50px;height:303px;background:#b8cce4;"></div>
<div style="left:84px;top:327px;width:227px;height:303px;background:#fff;"></div>
<div class="t" style="left:39.7px;top:309px;font-size:15.2px;line-height:15.2px;color:#fff;transform:scaleX(0.9000);transform-origin:0 0;font-weight:700;">KODE</div>
<div class="t" style="left:174.5px;top:309px;font-size:15.2px;line-height:15.2px;color:#fff;transform:scaleX(0.9124);transform-origin:0 0;font-weight:700;">MAPEL</div>
<div class="t" style="left:54.90859375px;top:332px;font-size:15.3px;line-height:15.3px;color:#000;transform:scaleX(0.9000);transform-origin:0 0;">A</div>
<div class="t" style="left:88.3px;top:332px;font-size:15.3px;line-height:15.3px;color:#000;transform:scaleX(1.0064);transform-origin:0 0;">Quran Hadits</div>
<div class="t" style="left:54.90859375px;top:355px;font-size:15.3px;line-height:15.3px;color:#000;transform:scaleX(0.9000);transform-origin:0 0;">B</div>
<div class="t" style="left:88.3px;top:355px;font-size:15.3px;line-height:15.3px;color:#000;transform:scaleX(1.0167);transform-origin:0 0;">Akidah Akhlak</div>
<div class="t" style="left:54.521875px;top:378px;font-size:15.3px;line-height:15.3px;color:#000;transform:scaleX(0.9000);transform-origin:0 0;">C</div>
<div class="t" style="left:88.3px;top:378px;font-size:15.3px;line-height:15.3px;color:#000;transform:scaleX(1.0013);transform-origin:0 0;">Fiqih</div>
<div class="t" style="left:54.2453125px;top:401px;font-size:15.3px;line-height:15.3px;color:#000;transform:scaleX(0.9500);transform-origin:0 0;">D</div>
<div class="t" style="left:88.3px;top:401px;font-size:15.3px;line-height:15.3px;color:#000;transform:scaleX(0.8193);transform-origin:0 0;">SKI</div>
<div class="t" style="left:54.90859375px;top:424px;font-size:15.3px;line-height:15.3px;color:#000;transform:scaleX(0.9000);transform-origin:0 0;">E</div>
<div class="t" style="left:88.3px;top:424px;font-size:15.3px;line-height:15.3px;color:#000;transform:scaleX(0.9668);transform-origin:0 0;">Bahasa Arab</div>
<div class="t" style="left:55.28828125px;top:447px;font-size:15.3px;line-height:15.3px;color:#000;transform:scaleX(0.9000);transform-origin:0 0;">F</div>
<div class="t" style="left:88.3px;top:447px;font-size:15.3px;line-height:15.3px;color:#000;transform:scaleX(0.9059);transform-origin:0 0;">PKn</div>
<div class="t" style="left:53.84453125px;top:470px;font-size:15.3px;line-height:15.3px;color:#000;transform:scaleX(0.9500);transform-origin:0 0;">G</div>
<div class="t" style="left:88.3px;top:470px;font-size:15.3px;line-height:15.3px;color:#000;transform:scaleX(0.9707);transform-origin:0 0;">Bahasa Indonesia</div>
<div class="t" style="left:54.2453125px;top:493px;font-size:15.3px;line-height:15.3px;color:#000;transform:scaleX(0.9500);transform-origin:0 0;">H</div>
<div class="t" style="left:88.3px;top:493px;font-size:15.3px;line-height:15.3px;color:#000;transform:scaleX(0.9574);transform-origin:0 0;">Bahasa Inggris</div>
<div class="t" style="left:57.5875px;top:516px;font-size:15.3px;line-height:15.3px;color:#000;transform:scaleX(0.9000);transform-origin:0 0;">I</div>
<div class="t" style="left:88.3px;top:516px;font-size:15.3px;line-height:15.3px;color:#000;transform:scaleX(0.9436);transform-origin:0 0;">Fisika</div>
<div class="t" style="left:56.0546875px;top:539px;font-size:15.3px;line-height:15.3px;color:#000;transform:scaleX(0.9000);transform-origin:0 0;">J</div>
<div class="t" style="left:88.3px;top:539px;font-size:15.3px;line-height:15.3px;color:#000;transform:scaleX(1.0061);transform-origin:0 0;">Biologi</div>
<div class="t" style="left:54.90859375px;top:562px;font-size:15.3px;line-height:15.3px;color:#000;transform:scaleX(0.9000);transform-origin:0 0;">K</div>
<div class="t" style="left:88.3px;top:562px;font-size:15.3px;line-height:15.3px;color:#000;transform:scaleX(0.9856);transform-origin:0 0;">Kimia</div>
<div class="t" style="left:55.66796875px;top:585px;font-size:15.3px;line-height:15.3px;color:#000;transform:scaleX(0.9000);transform-origin:0 0;">L</div>
<div class="t" style="left:88.3px;top:585px;font-size:15.3px;line-height:15.3px;color:#000;transform:scaleX(1.0587);transform-origin:0 0;">Matematika</div>
<div class="t" style="left:53.125px;top:608px;font-size:15.3px;line-height:15.3px;color:#000;transform:scaleX(1.0000);transform-origin:0 0;">M</div>
<div class="t" style="left:88.3px;top:608px;font-size:15.3px;line-height:15.3px;color:#000;transform:scaleX(1.0115);transform-origin:0 0;">Ekonomi</div>
<div style="left:326px;top:304px;width:315px;height:23px;background:#244062;"></div>
<div style="left:326px;top:327px;width:67px;height:303px;background:#b8cce4;"></div>
<div style="left:393px;top:327px;width:220px;height:303px;background:#fff;"></div>
<div style="left:613px;top:327px;width:28px;height:303px;background:#b8cce4;"></div>
<div class="t" style="left:340px;top:309px;font-size:15.2px;line-height:15.2px;color:#fff;transform:scaleX(0.9182);transform-origin:0 0;font-weight:700;">KODE</div>
<div class="t" style="left:482.2px;top:309px;font-size:15.2px;line-height:15.2px;color:#fff;transform:scaleX(0.9303);transform-origin:0 0;font-weight:700;">GURU</div>
<div class="t" style="left:355.529296875px;top:332px;font-size:15.3px;line-height:15.3px;color:#000;transform:scaleX(1.0500);transform-origin:0 0;">1</div>
<div class="t" style="left:396.6px;top:332px;font-size:15.3px;line-height:15.3px;color:#000;transform:scaleX(1.0421);transform-origin:0 0;">Mohamad Amin Wafai, M.Pd</div>
<div class="t" style="left:629.05859375px;top:332px;font-size:15.3px;line-height:15.3px;color:#000;transform:scaleX(1.0500);transform-origin:0 0;">1</div>
<div class="t" style="left:355.529296875px;top:355px;font-size:15.3px;line-height:15.3px;color:#000;transform:scaleX(1.0500);transform-origin:0 0;">2</div>
<div class="t" style="left:396.6px;top:355px;font-size:15.3px;line-height:15.3px;color:#000;transform:scaleX(1.0007);transform-origin:0 0;">Mafahir, S.Pd.I</div>
<div class="t" style="left:629.05859375px;top:355px;font-size:15.3px;line-height:15.3px;color:#000;transform:scaleX(1.0500);transform-origin:0 0;">2</div>
<div class="t" style="left:355.529296875px;top:378px;font-size:15.3px;line-height:15.3px;color:#000;transform:scaleX(1.0500);transform-origin:0 0;">3</div>
<div class="t" style="left:396.6px;top:378px;font-size:15.3px;line-height:15.3px;color:#000;transform:scaleX(0.9751);transform-origin:0 0;">Rusmanto, S.Pd.I</div>
<div class="t" style="left:629.05859375px;top:378px;font-size:15.3px;line-height:15.3px;color:#000;transform:scaleX(1.0500);transform-origin:0 0;">3</div>
<div class="t" style="left:355.529296875px;top:401px;font-size:15.3px;line-height:15.3px;color:#000;transform:scaleX(1.0500);transform-origin:0 0;">4</div>
<div class="t" style="left:396.6px;top:401px;font-size:15.3px;line-height:15.3px;color:#000;transform:scaleX(0.9751);transform-origin:0 0;">Sumarsono, S.Pd</div>
<div class="t" style="left:629.05859375px;top:401px;font-size:15.3px;line-height:15.3px;color:#000;transform:scaleX(1.0500);transform-origin:0 0;">4</div>
<div class="t" style="left:355.529296875px;top:424px;font-size:15.3px;line-height:15.3px;color:#000;transform:scaleX(1.0500);transform-origin:0 0;">5</div>
<div class="t" style="left:396.6px;top:424px;font-size:15.3px;line-height:15.3px;color:#000;transform:scaleX(0.9992);transform-origin:0 0;">Wahyu Haryanto, S.Pd.I</div>
<div class="t" style="left:629.05859375px;top:424px;font-size:15.3px;line-height:15.3px;color:#000;transform:scaleX(1.0500);transform-origin:0 0;">5</div>
<div class="t" style="left:355.529296875px;top:447px;font-size:15.3px;line-height:15.3px;color:#000;transform:scaleX(1.0500);transform-origin:0 0;">6</div>
<div class="t" style="left:396.6px;top:447px;font-size:15.3px;line-height:15.3px;color:#000;transform:scaleX(0.9597);transform-origin:0 0;">Trisno, S.Pd.I</div>
<div class="t" style="left:629.05859375px;top:447px;font-size:15.3px;line-height:15.3px;color:#000;transform:scaleX(1.0500);transform-origin:0 0;">6</div>
<div class="t" style="left:355.529296875px;top:470px;font-size:15.3px;line-height:15.3px;color:#000;transform:scaleX(1.0500);transform-origin:0 0;">7</div>
<div class="t" style="left:396.6px;top:470px;font-size:15.3px;line-height:15.3px;color:#000;transform:scaleX(0.9671);transform-origin:0 0;">Laras Budi Kanastri, S.Pd</div>
<div class="t" style="left:629.05859375px;top:470px;font-size:15.3px;line-height:15.3px;color:#000;transform:scaleX(1.0500);transform-origin:0 0;">7</div>
<div class="t" style="left:355.529296875px;top:493px;font-size:15.3px;line-height:15.3px;color:#000;transform:scaleX(1.0500);transform-origin:0 0;">8</div>
<div class="t" style="left:396.6px;top:493px;font-size:15.3px;line-height:15.3px;color:#000;transform:scaleX(0.9799);transform-origin:0 0;">Hardani Yuswaedi, S.Pd</div>
<div class="t" style="left:629.05859375px;top:493px;font-size:15.3px;line-height:15.3px;color:#000;transform:scaleX(1.0500);transform-origin:0 0;">8</div>
<div class="t" style="left:355.529296875px;top:516px;font-size:15.3px;line-height:15.3px;color:#000;transform:scaleX(1.0500);transform-origin:0 0;">9</div>
<div class="t" style="left:396.6px;top:516px;font-size:15.3px;line-height:15.3px;color:#000;transform:scaleX(0.9816);transform-origin:0 0;">Eki Roro Nekowati, S.Pd</div>
<div class="t" style="left:629.05859375px;top:516px;font-size:15.3px;line-height:15.3px;color:#000;transform:scaleX(1.0500);transform-origin:0 0;">9</div>
<div class="t" style="left:351.066796875px;top:539px;font-size:15.3px;line-height:15.3px;color:#000;transform:scaleX(1.0500);transform-origin:0 0;">10</div>
<div class="t" style="left:396.6px;top:539px;font-size:15.3px;line-height:15.3px;color:#000;transform:scaleX(1.0128);transform-origin:0 0;">Dra. Toer Parwati</div>
<div class="t" style="left:620.13359375px;top:539px;font-size:15.3px;line-height:15.3px;color:#000;transform:scaleX(1.0500);transform-origin:0 0;">10</div>
<div class="t" style="left:351.657421875px;top:562px;font-size:15.3px;line-height:15.3px;color:#000;transform:scaleX(1.0500);transform-origin:0 0;">11</div>
<div class="t" style="left:396.6px;top:562px;font-size:15.3px;line-height:15.3px;color:#000;transform:scaleX(0.9842);transform-origin:0 0;">Wahyudi, S.Pd.I</div>
<div class="t" style="left:621.31484375px;top:562px;font-size:15.3px;line-height:15.3px;color:#000;transform:scaleX(1.0500);transform-origin:0 0;">11</div>
<div class="t" style="left:351.066796875px;top:585px;font-size:15.3px;line-height:15.3px;color:#000;transform:scaleX(1.0500);transform-origin:0 0;">12</div>
<div class="t" style="left:396.6px;top:585px;font-size:15.3px;line-height:15.3px;color:#000;transform:scaleX(0.9759);transform-origin:0 0;">Ety Setyawati, S.Pd.I</div>
<div class="t" style="left:620.13359375px;top:585px;font-size:15.3px;line-height:15.3px;color:#000;transform:scaleX(1.0500);transform-origin:0 0;">12</div>
<div class="t" style="left:351.066796875px;top:608px;font-size:15.3px;line-height:15.3px;color:#000;transform:scaleX(1.0500);transform-origin:0 0;">13</div>
<div class="t" style="left:396.6px;top:608px;font-size:15.3px;line-height:15.3px;color:#000;transform:scaleX(0.9806);transform-origin:0 0;">Rumiatun, S.Pd.I</div>
<div class="t" style="left:620.13359375px;top:608px;font-size:15.3px;line-height:15.3px;color:#000;transform:scaleX(1.0500);transform-origin:0 0;">13</div>
<div style="left:656px;top:304px;width:107px;height:23px;background:#244062;"></div>
<div style="left:656px;top:327px;width:32px;height:303px;background:#b8cce4;"></div>
<div style="left:688px;top:327px;width:75px;height:303px;background:#fff;"></div>
<div class="t" style="left:661.6px;top:309px;font-size:15.2px;line-height:15.2px;color:#fff;transform:scaleX(0.9745);transform-origin:0 0;font-weight:700;">NO</div>
<div class="t" style="left:705.6px;top:309px;font-size:15.2px;line-height:15.2px;color:#fff;transform:scaleX(0.8002);transform-origin:0 0;font-weight:700;">KELAS</div>
<div class="t" style="left:668.029296875px;top:332px;font-size:15.3px;line-height:15.3px;color:#000;transform:scaleX(1.0500);transform-origin:0 0;">1</div>
<div class="t" style="left:710.8284375px;top:332px;font-size:15.3px;line-height:15.3px;color:#000;transform:scaleX(0.9700);transform-origin:0 0;">VII A</div>
<div class="t" style="left:668.029296875px;top:355px;font-size:15.3px;line-height:15.3px;color:#000;transform:scaleX(1.0500);transform-origin:0 0;">2</div>
<div class="t" style="left:710.41921875px;top:355px;font-size:15.3px;line-height:15.3px;color:#000;transform:scaleX(0.9700);transform-origin:0 0;">VII B</div>
<div class="t" style="left:668.029296875px;top:378px;font-size:15.3px;line-height:15.3px;color:#000;transform:scaleX(1.0500);transform-origin:0 0;">3</div>
<div class="t" style="left:710.01px;top:378px;font-size:15.3px;line-height:15.3px;color:#000;transform:scaleX(0.9700);transform-origin:0 0;">VII C</div>
<div class="t" style="left:668.029296875px;top:401px;font-size:15.3px;line-height:15.3px;color:#000;transform:scaleX(1.0500);transform-origin:0 0;">4</div>
<div class="t" style="left:710.01px;top:401px;font-size:15.3px;line-height:15.3px;color:#000;transform:scaleX(0.9700);transform-origin:0 0;">VII D</div>
<div class="t" style="left:668.029296875px;top:424px;font-size:15.3px;line-height:15.3px;color:#000;transform:scaleX(1.0500);transform-origin:0 0;">5</div>
<div class="t" style="left:710.41921875px;top:424px;font-size:15.3px;line-height:15.3px;color:#000;transform:scaleX(0.9700);transform-origin:0 0;">VII E</div>
<div class="t" style="left:668.029296875px;top:447px;font-size:15.3px;line-height:15.3px;color:#000;transform:scaleX(1.0500);transform-origin:0 0;">6</div>
<div class="t" style="left:710.836015625px;top:447px;font-size:15.3px;line-height:15.3px;color:#000;transform:scaleX(0.9700);transform-origin:0 0;">VII F</div>
<div class="t" style="left:668.029296875px;top:470px;font-size:15.3px;line-height:15.3px;color:#000;transform:scaleX(1.0500);transform-origin:0 0;">7</div>
<div class="t" style="left:709.593203125px;top:470px;font-size:15.3px;line-height:15.3px;color:#000;transform:scaleX(0.9700);transform-origin:0 0;">VII G</div>
<div class="t" style="left:668.029296875px;top:493px;font-size:15.3px;line-height:15.3px;color:#000;transform:scaleX(1.0500);transform-origin:0 0;">8</div>
<div class="t" style="left:710.01px;top:493px;font-size:15.3px;line-height:15.3px;color:#000;transform:scaleX(0.9700);transform-origin:0 0;">VII H</div>
<div class="t" style="left:668.029296875px;top:516px;font-size:15.3px;line-height:15.3px;color:#000;transform:scaleX(1.0500);transform-origin:0 0;">9</div>
<div class="t" style="left:713.306484375px;top:516px;font-size:15.3px;line-height:15.3px;color:#000;transform:scaleX(0.9700);transform-origin:0 0;">VII I</div>
<div class="t" style="left:663.566796875px;top:539px;font-size:15.3px;line-height:15.3px;color:#000;transform:scaleX(1.0500);transform-origin:0 0;">10</div>
<div class="t" style="left:711.654453125px;top:539px;font-size:15.3px;line-height:15.3px;color:#000;transform:scaleX(0.9700);transform-origin:0 0;">VII J</div>
<div class="t" style="left:664.157421875px;top:562px;font-size:15.3px;line-height:15.3px;color:#000;transform:scaleX(1.0500);transform-origin:0 0;">11</div>
<div class="t" style="left:708.7671875px;top:562px;font-size:15.3px;line-height:15.3px;color:#000;transform:scaleX(0.9700);transform-origin:0 0;">VIII A</div>
<div class="t" style="left:663.566796875px;top:585px;font-size:15.3px;line-height:15.3px;color:#000;transform:scaleX(1.0500);transform-origin:0 0;">12</div>
<div class="t" style="left:708.35796875px;top:585px;font-size:15.3px;line-height:15.3px;color:#000;transform:scaleX(0.9700);transform-origin:0 0;">VIII B</div>
<div class="t" style="left:663.566796875px;top:608px;font-size:15.3px;line-height:15.3px;color:#000;transform:scaleX(1.0500);transform-origin:0 0;">13</div>
<div class="t" style="left:707.94875px;top:608px;font-size:15.3px;line-height:15.3px;color:#000;transform:scaleX(0.9700);transform-origin:0 0;">VIII C</div>
<div style="left:796px;top:304px;width:293px;height:23px;background:#244062;"></div>
<div style="left:796px;top:327px;width:293px;height:276px;background:#8db4e2;"></div>
<div class="t" style="left:821.4px;top:309px;font-size:15.2px;line-height:15.2px;color:#fff;transform:scaleX(0.9415);transform-origin:0 0;font-weight:700;">JAM</div>
<div class="t" style="left:924.5px;top:309px;font-size:15.2px;line-height:15.2px;color:#fff;transform:scaleX(0.9107);transform-origin:0 0;font-weight:700;">ALOKASI WAKTU</div>
<div class="t" style="left:831.929296875px;top:332px;font-size:15.3px;line-height:15.3px;color:#000;transform:scaleX(1.0500);transform-origin:0 0;">1</div>
<div class="t" style="left:904.4159375px;top:332px;font-size:15.3px;line-height:15.3px;color:#000;transform:scaleX(1.0600);transform-origin:0 0;">7:00</div>
<div class="t" style="left:978.021953125px;top:332px;font-size:15.3px;line-height:15.3px;color:#000;transform:scaleX(0.9700);transform-origin:0 0;">-</div>
<div class="t" style="left:1027.8159375px;top:332px;font-size:15.3px;line-height:15.3px;color:#000;transform:scaleX(1.0600);transform-origin:0 0;">7:40</div>
<div class="t" style="left:831.929296875px;top:355px;font-size:15.3px;line-height:15.3px;color:#000;transform:scaleX(1.0500);transform-origin:0 0;">2</div>
<div class="t" style="left:904.4159375px;top:355px;font-size:15.3px;line-height:15.3px;color:#000;transform:scaleX(1.0600);transform-origin:0 0;">7:40</div>
<div class="t" style="left:978.021953125px;top:355px;font-size:15.3px;line-height:15.3px;color:#000;transform:scaleX(0.9700);transform-origin:0 0;">-</div>
<div class="t" style="left:1027.8159375px;top:355px;font-size:15.3px;line-height:15.3px;color:#000;transform:scaleX(1.0600);transform-origin:0 0;">8:20</div>
<div class="t" style="left:831.929296875px;top:378px;font-size:15.3px;line-height:15.3px;color:#000;transform:scaleX(1.0500);transform-origin:0 0;">3</div>
<div class="t" style="left:904.4159375px;top:378px;font-size:15.3px;line-height:15.3px;color:#000;transform:scaleX(1.0600);transform-origin:0 0;">8:20</div>
<div class="t" style="left:978.021953125px;top:378px;font-size:15.3px;line-height:15.3px;color:#000;transform:scaleX(0.9700);transform-origin:0 0;">-</div>
<div class="t" style="left:1027.8159375px;top:378px;font-size:15.3px;line-height:15.3px;color:#000;transform:scaleX(1.0600);transform-origin:0 0;">9:00</div>
<div class="t" style="left:831.929296875px;top:401px;font-size:15.3px;line-height:15.3px;color:#000;transform:scaleX(1.0500);transform-origin:0 0;">4</div>
<div class="t" style="left:904.4159375px;top:401px;font-size:15.3px;line-height:15.3px;color:#000;transform:scaleX(1.0600);transform-origin:0 0;">9:00</div>
<div class="t" style="left:978.021953125px;top:401px;font-size:15.3px;line-height:15.3px;color:#000;transform:scaleX(0.9700);transform-origin:0 0;">-</div>
<div class="t" style="left:1027.8159375px;top:401px;font-size:15.3px;line-height:15.3px;color:#000;transform:scaleX(1.0600);transform-origin:0 0;">9:40</div>
<div class="t" style="left:831.929296875px;top:424px;font-size:15.3px;line-height:15.3px;color:#000;transform:scaleX(1.0500);transform-origin:0 0;">5</div>
<div class="t" style="left:904.4159375px;top:424px;font-size:15.3px;line-height:15.3px;color:#000;transform:scaleX(1.0600);transform-origin:0 0;">9:40</div>
<div class="t" style="left:978.021953125px;top:424px;font-size:15.3px;line-height:15.3px;color:#000;transform:scaleX(0.9700);transform-origin:0 0;">-</div>
<div class="t" style="left:1027.8159375px;top:424px;font-size:15.3px;line-height:15.3px;color:#000;transform:scaleX(1.0600);transform-origin:0 0;">9:55</div>
<div class="t" style="left:831.929296875px;top:447px;font-size:15.3px;line-height:15.3px;color:#000;transform:scaleX(1.0500);transform-origin:0 0;">6</div>
<div class="t" style="left:904.4159375px;top:447px;font-size:15.3px;line-height:15.3px;color:#000;transform:scaleX(1.0600);transform-origin:0 0;">9:55</div>
<div class="t" style="left:978.021953125px;top:447px;font-size:15.3px;line-height:15.3px;color:#000;transform:scaleX(0.9700);transform-origin:0 0;">-</div>
<div class="t" style="left:1023.3109374999999px;top:447px;font-size:15.3px;line-height:15.3px;color:#000;transform:scaleX(1.0600);transform-origin:0 0;">10:35</div>
<div class="t" style="left:831.929296875px;top:470px;font-size:15.3px;line-height:15.3px;color:#000;transform:scaleX(1.0500);transform-origin:0 0;">7</div>
<div class="t" style="left:899.9109375px;top:470px;font-size:15.3px;line-height:15.3px;color:#000;transform:scaleX(1.0600);transform-origin:0 0;">10:35</div>
<div class="t" style="left:978.021953125px;top:470px;font-size:15.3px;line-height:15.3px;color:#000;transform:scaleX(0.9700);transform-origin:0 0;">-</div>
<div class="t" style="left:1023.9071875px;top:470px;font-size:15.3px;line-height:15.3px;color:#000;transform:scaleX(1.0600);transform-origin:0 0;">11:15</div>
<div class="t" style="left:831.929296875px;top:493px;font-size:15.3px;line-height:15.3px;color:#000;transform:scaleX(1.0500);transform-origin:0 0;">8</div>
<div class="t" style="left:900.5071875000001px;top:493px;font-size:15.3px;line-height:15.3px;color:#000;transform:scaleX(1.0600);transform-origin:0 0;">11:15</div>
<div class="t" style="left:978.021953125px;top:493px;font-size:15.3px;line-height:15.3px;color:#000;transform:scaleX(0.9700);transform-origin:0 0;">-</div>
<div class="t" style="left:1023.9071875px;top:493px;font-size:15.3px;line-height:15.3px;color:#000;transform:scaleX(1.0600);transform-origin:0 0;">11:55</div>
<div class="t" style="left:831.929296875px;top:516px;font-size:15.3px;line-height:15.3px;color:#000;transform:scaleX(1.0500);transform-origin:0 0;">9</div>
<div class="t" style="left:900.5071875000001px;top:516px;font-size:15.3px;line-height:15.3px;color:#000;transform:scaleX(1.0600);transform-origin:0 0;">11:55</div>
<div class="t" style="left:978.021953125px;top:516px;font-size:15.3px;line-height:15.3px;color:#000;transform:scaleX(0.9700);transform-origin:0 0;">-</div>
<div class="t" style="left:1023.3109374999999px;top:516px;font-size:15.3px;line-height:15.3px;color:#000;transform:scaleX(1.0600);transform-origin:0 0;">12:30</div>
<div class="t" style="left:827.466796875px;top:539px;font-size:15.3px;line-height:15.3px;color:#000;transform:scaleX(1.0500);transform-origin:0 0;">10</div>
<div class="t" style="left:899.9109375px;top:539px;font-size:15.3px;line-height:15.3px;color:#000;transform:scaleX(1.0600);transform-origin:0 0;">12:30</div>
<div class="t" style="left:978.021953125px;top:539px;font-size:15.3px;line-height:15.3px;color:#000;transform:scaleX(0.9700);transform-origin:0 0;">-</div>
<div class="t" style="left:1023.3109374999999px;top:539px;font-size:15.3px;line-height:15.3px;color:#000;transform:scaleX(1.0600);transform-origin:0 0;">13:10</div>
<div class="t" style="left:828.0574218749999px;top:562px;font-size:15.3px;line-height:15.3px;color:#000;transform:scaleX(1.0500);transform-origin:0 0;">11</div>
<div class="t" style="left:899.9109375px;top:562px;font-size:15.3px;line-height:15.3px;color:#000;transform:scaleX(1.0600);transform-origin:0 0;">13:10</div>
<div class="t" style="left:978.021953125px;top:562px;font-size:15.3px;line-height:15.3px;color:#000;transform:scaleX(0.9700);transform-origin:0 0;">-</div>
<div class="t" style="left:1023.3109374999999px;top:562px;font-size:15.3px;line-height:15.3px;color:#000;transform:scaleX(1.0600);transform-origin:0 0;">13:40</div>
<div class="t" style="left:827.466796875px;top:585px;font-size:15.3px;line-height:15.3px;color:#000;transform:scaleX(1.0500);transform-origin:0 0;">12</div>
<div class="t" style="left:899.9109375px;top:585px;font-size:15.3px;line-height:15.3px;color:#000;transform:scaleX(1.0600);transform-origin:0 0;">13:40</div>
<div class="t" style="left:978.021953125px;top:585px;font-size:15.3px;line-height:15.3px;color:#000;transform:scaleX(0.9700);transform-origin:0 0;">-</div>
<div class="t" style="left:1023.3109374999999px;top:585px;font-size:15.3px;line-height:15.3px;color:#000;transform:scaleX(1.0600);transform-origin:0 0;">14:20</div>
<div class="t" style="left:800.5px;top:609px;font-size:15.3px;line-height:15.3px;color:#000;transform:scaleX(1.0191);transform-origin:0 0;">Keterangan waktu:</div>
<div style="left:34px;top:304px;width:278px;height:1px;background:#000;"></div>
<div style="left:326px;top:304px;width:316px;height:1px;background:#000;"></div>
<div style="left:656px;top:304px;width:108px;height:1px;background:#000;"></div>
<div style="left:796px;top:304px;width:294px;height:1px;background:#000;"></div>
<div style="left:34px;top:327px;width:278px;height:1px;background:#000;"></div>
<div style="left:326px;top:327px;width:316px;height:1px;background:#000;"></div>
<div style="left:656px;top:327px;width:108px;height:1px;background:#000;"></div>
<div style="left:796px;top:327px;width:294px;height:1px;background:#000;"></div>
<div style="left:34px;top:350px;width:278px;height:1px;background:#000;"></div>
<div style="left:326px;top:350px;width:316px;height:1px;background:#000;"></div>
<div style="left:656px;top:350px;width:108px;height:1px;background:#000;"></div>
<div style="left:796px;top:350px;width:294px;height:1px;background:#000;"></div>
<div style="left:34px;top:373px;width:278px;height:1px;background:#000;"></div>
<div style="left:326px;top:373px;width:316px;height:1px;background:#000;"></div>
<div style="left:656px;top:373px;width:108px;height:1px;background:#000;"></div>
<div style="left:796px;top:373px;width:294px;height:1px;background:#000;"></div>
<div style="left:34px;top:396px;width:278px;height:1px;background:#000;"></div>
<div style="left:326px;top:396px;width:316px;height:1px;background:#000;"></div>
<div style="left:656px;top:396px;width:108px;height:1px;background:#000;"></div>
<div style="left:796px;top:396px;width:294px;height:1px;background:#000;"></div>
<div style="left:34px;top:419px;width:278px;height:1px;background:#000;"></div>
<div style="left:326px;top:419px;width:316px;height:1px;background:#000;"></div>
<div style="left:656px;top:419px;width:108px;height:1px;background:#000;"></div>
<div style="left:796px;top:419px;width:294px;height:1px;background:#000;"></div>
<div style="left:34px;top:442px;width:278px;height:1px;background:#000;"></div>
<div style="left:326px;top:442px;width:316px;height:1px;background:#000;"></div>
<div style="left:656px;top:442px;width:108px;height:1px;background:#000;"></div>
<div style="left:796px;top:442px;width:294px;height:1px;background:#000;"></div>
<div style="left:34px;top:465px;width:278px;height:1px;background:#000;"></div>
<div style="left:326px;top:465px;width:316px;height:1px;background:#000;"></div>
<div style="left:656px;top:465px;width:108px;height:1px;background:#000;"></div>
<div style="left:796px;top:465px;width:294px;height:1px;background:#000;"></div>
<div style="left:34px;top:488px;width:278px;height:1px;background:#000;"></div>
<div style="left:326px;top:488px;width:316px;height:1px;background:#000;"></div>
<div style="left:656px;top:488px;width:108px;height:1px;background:#000;"></div>
<div style="left:796px;top:488px;width:294px;height:1px;background:#000;"></div>
<div style="left:34px;top:511px;width:278px;height:1px;background:#000;"></div>
<div style="left:326px;top:511px;width:316px;height:1px;background:#000;"></div>
<div style="left:656px;top:511px;width:108px;height:1px;background:#000;"></div>
<div style="left:796px;top:511px;width:294px;height:1px;background:#000;"></div>
<div style="left:34px;top:534px;width:278px;height:1px;background:#000;"></div>
<div style="left:326px;top:534px;width:316px;height:1px;background:#000;"></div>
<div style="left:656px;top:534px;width:108px;height:1px;background:#000;"></div>
<div style="left:796px;top:534px;width:294px;height:1px;background:#000;"></div>
<div style="left:34px;top:557px;width:278px;height:1px;background:#000;"></div>
<div style="left:326px;top:557px;width:316px;height:1px;background:#000;"></div>
<div style="left:656px;top:557px;width:108px;height:1px;background:#000;"></div>
<div style="left:796px;top:557px;width:294px;height:1px;background:#000;"></div>
<div style="left:34px;top:580px;width:278px;height:1px;background:#000;"></div>
<div style="left:326px;top:580px;width:316px;height:1px;background:#000;"></div>
<div style="left:656px;top:580px;width:108px;height:1px;background:#000;"></div>
<div style="left:796px;top:580px;width:294px;height:1px;background:#000;"></div>
<div style="left:34px;top:603px;width:278px;height:1px;background:#000;"></div>
<div style="left:326px;top:603px;width:316px;height:1px;background:#000;"></div>
<div style="left:656px;top:603px;width:108px;height:1px;background:#000;"></div>
<div style="left:796px;top:603px;width:294px;height:1px;background:#000;"></div>
<div style="left:34px;top:626px;width:278px;height:1px;background:#000;"></div>
<div style="left:326px;top:626px;width:316px;height:1px;background:#000;"></div>
<div style="left:656px;top:626px;width:108px;height:1px;background:#000;"></div>
<div style="left:84px;top:304px;width:1px;height:326px;background:#000;"></div>
<div style="left:311px;top:304px;width:1px;height:326px;background:#000;"></div>
<div style="left:326px;top:304px;width:1px;height:326px;background:#000;"></div>
<div style="left:393px;top:304px;width:1px;height:326px;background:#000;"></div>
<div style="left:613px;top:304px;width:1px;height:326px;background:#000;"></div>
<div style="left:641px;top:304px;width:1px;height:326px;background:#000;"></div>
<div style="left:656px;top:304px;width:1px;height:326px;background:#000;"></div>
<div style="left:688px;top:304px;width:1px;height:326px;background:#000;"></div>
<div style="left:763px;top:304px;width:1px;height:326px;background:#000;"></div>
<div style="left:796px;top:304px;width:1px;height:300px;background:#000;"></div>
<div style="left:875px;top:304px;width:1px;height:300px;background:#000;"></div>
<div style="left:1089px;top:304px;width:1px;height:300px;background:#000;"></div>
<div style="left:964px;top:327px;width:1px;height:277px;background:#000;"></div>
<div style="left:996px;top:327px;width:1px;height:277px;background:#000;"></div>
<div style="left:875px;top:627px;width:214px;height:3px;background:#d6d3dd;"></div>
<div style="left:34px;top:219px;width:1.3px;height:411px;background:#1a1ad0;"></div>
<div style="left:34px;top:218.7px;width:1090px;height:1.4px;background:#1a1ad0;"></div>
<div style="left:1121.2px;top:219px;width:3.2px;height:411px;background:#0505d2;"></div>
<div style="left:392px;top:441px;width:223px;height:26px;border:2px solid #217346;"></div>
<div style="left:610px;top:462px;width:7px;height:7px;background:#217346;border:1px solid #fff;"></div>
<div style="left:1259px;top:195px;width:20px;height:435px;background:#e6e6e6;"></div>
<div style="left:1263px;top:198px;width:15px;height:15px;background:#fff;border:1px solid #c6c6c6;"></div>
<svg style="left:1267px;top:203px;" width="8" height="5" viewBox="0 0 8 5"><path d="M0 4.500h7L3.500 0.500z" fill="#777"/></svg>
<div style="left:1263px;top:214px;width:15px;height:75px;background:#fff;border:1px solid #c6c6c6;"></div>
<div style="left:1263px;top:616.5px;width:15px;height:14.5px;background:#fff;border:1px solid #c6c6c6;"></div>
<svg style="left:1267px;top:621.5px;" width="8" height="5" viewBox="0 0 8 5"><path d="M0 0.500h7L3.500 4.500z" fill="#777"/></svg>
<div style="left:0px;top:630px;width:1279px;height:28px;background:#e6e6e6;"></div>
<div style="left:0px;top:630px;width:1259px;height:1px;background:#c2c2c2;"></div>
<div style="left:1023px;top:637px;width:15px;height:15px;background:#fff;border:1px solid #c6c6c6;"></div>
<svg style="left:1027px;top:640.5px;" width="6" height="8" viewBox="0 0 6 8"><path d="M5 0.500v7L0.800 4z" fill="#555"/></svg>
<div style="left:1038.5px;top:637px;width:193px;height:15px;background:#fff;border:1px solid #c6c6c6;"></div>
<div style="left:1245px;top:637px;width:15px;height:15px;background:#fff;border:1px solid #c6c6c6;"></div>
<svg style="left:1250px;top:640.5px;" width="6" height="8" viewBox="0 0 6 8"><path d="M1 0.500v7L5.200 4z" fill="#555"/></svg>
<div style="left:1007px;top:640.5px;width:1.6px;height:1.6px;background:#9a9a9a;"></div>
<div style="left:1007px;top:644px;width:1.6px;height:1.6px;background:#9a9a9a;"></div>
<div style="left:1007px;top:647.5px;width:1.6px;height:1.6px;background:#9a9a9a;"></div>
<svg style="left:27px;top:639.5px;" width="5" height="8" viewBox="0 0 5 8"><path d="M4.500 0.300v7.400L0.500 4z" fill="#c8c8c8"/></svg>
<svg style="left:55.5px;top:639.5px;" width="5" height="8" viewBox="0 0 5 8"><path d="M0.500 0.300v7.400L4.500 4z" fill="#217346"/></svg>
<div style="left:100px;top:630px;width:56px;height:25px;background:#f1f1f1;border-bottom:2.500px solid #217346;border-right:1px solid #c6c6c6;border-left:1px solid #c6c6c6;"></div>
<div class="t" style="left:112.6px;top:637px;font-size:13px;line-height:13px;color:#217346;transform:scaleX(0.9323);transform-origin:0 0;font-weight:700;">Kode</div>
<div class="t" style="left:168.3px;top:637px;font-size:13px;line-height:13px;color:#444;transform:scaleX(1.0624);transform-origin:0 0;">bbn bljr</div>
<div class="t" style="left:243.3px;top:637px;font-size:13px;line-height:13px;color:#444;transform:scaleX(0.9718);transform-origin:0 0;">Pembagian Jam</div>
<div class="t" style="left:364.4px;top:637px;font-size:13px;line-height:13px;color:#444;transform:scaleX(0.9686);transform-origin:0 0;">Edit Jadwal</div>
<div class="t" style="left:460.4px;top:637px;font-size:13px;line-height:13px;color:#444;transform:scaleX(0.8962);transform-origin:0 0;">JADWAL KELAS</div>
<div class="t" style="left:579.2px;top:637px;font-size:13px;line-height:13px;color:#444;transform:scaleX(0.9225);transform-origin:0 0;">JADWAL GURU</div>
<div class="t" style="left:697.5px;top:637px;font-size:13px;line-height:13px;color:#444;transform:scaleX(0.9059);transform-origin:0 0;">CETAK JADWAL</div>
<div class="t" style="left:819px;top:637px;font-size:13px;line-height:13px;color:#444;transform:scaleX(0.9177);transform-origin:0 0;">PEMBAGIAN JAM CE</div>
<div style="left:228.0px;top:634px;width:1px;height:20px;background:#ababab;"></div>
<div style="left:350.0px;top:634px;width:1px;height:20px;background:#ababab;"></div>
<div style="left:443.5px;top:634px;width:1px;height:20px;background:#ababab;"></div>
<div style="left:564.0px;top:634px;width:1px;height:20px;background:#ababab;"></div>
<div style="left:681.0px;top:634px;width:1px;height:20px;background:#ababab;"></div>
<div style="left:803.0px;top:634px;width:1px;height:20px;background:#ababab;"></div>
<div style="left:946px;top:645.5px;width:2px;height:2px;background:#217346;"></div>
<div style="left:950px;top:645.5px;width:2px;height:2px;background:#217346;"></div>
<div style="left:954px;top:645.5px;width:2px;height:2px;background:#217346;"></div>
<svg style="left:969px;top:635.5px;" width="18" height="18" viewBox="0 0 18 18"><circle cx="8.800" cy="8.600" r="7.200" fill="none" stroke="#666" stroke-width="1.200"/><path d="M8.800 4.800v7.600M5 8.600h7.600" stroke="#666" stroke-width="1.300"/></svg>
<div style="left:0px;top:658px;width:1279px;height:22px;background:#f1f1f1;"></div>
<div style="left:0px;top:657.5px;width:1279px;height:1px;background:#c8c8c8;"></div>
<div class="t" style="left:7.5px;top:664px;font-size:11.5px;line-height:11.5px;color:#444;transform:scaleX(0.9113);transform-origin:0 0;">Ready</div>
<div style="left:1064.5px;top:658.5px;width:37px;height:21.5px;background:#c6c6c6;"></div>
<svg style="left:1000px;top:661.5px;" width="14" height="14" viewBox="0 0 14 14"><path d="M0.600 0.600h12.400v12.400H0.600zM0.600 4.700h12.400M0.600 8.900h12.400M4.700 0.600v12.400M8.900 0.600v12.400" fill="none" stroke="#666" stroke-width="1.100"/></svg>
<svg style="left:1038px;top:661.5px;" width="15" height="14" viewBox="0 0 15 14"><rect x="0.600" y="0.600" width="13.600" height="12.400" fill="none" stroke="#666" stroke-width="1.100"/><rect x="3.600" y="3.400" width="7.600" height="6.800" fill="none" stroke="#666" stroke-width="1.100"/><path d="M5 5.600h4.800M5 7.800h4.800" stroke="#666" stroke-width="0.900"/></svg>
<svg style="left:1076.5px;top:661.5px;" width="14" height="14" viewBox="0 0 14 14"><path d="M0.600 0.600h12.400v12.400H0.600zM0.600 5.600h12.400M4.800 0.600V5.600" fill="none" stroke="#666" stroke-width="1.200"/></svg>
<div style="left:1107px;top:668px;width:6.5px;height:1.8px;background:#555;"></div>
<div style="left:1117px;top:668px;width:100px;height:1px;background:#8a8a8a;"></div>
<div style="left:1168px;top:663px;width:4.5px;height:11.5px;background:#666;"></div>
<div style="left:1221px;top:668px;width:8.5px;height:1.8px;background:#555;"></div>
<div style="left:1224.4px;top:664.6px;width:1.8px;height:8.5px;background:#555;"></div>
<div class="t" style="left:1245px;top:664px;font-size:11.5px;line-height:11.5px;color:#444;transform:scaleX(0.9033);transform-origin:0 0;">115%</div>
<div style="left:1245.21px;top:672px;width:2.23px;height:1.3px;background:#f1f1f1;"></div>
<div style="left:1248.74px;top:672px;width:2.08px;height:1.3px;background:#f1f1f1;"></div>
<div style="left:1250.99px;top:672px;width:2.23px;height:1.3px;background:#f1f1f1;"></div>
<div style="left:1254.53px;top:672px;width:2.08px;height:1.3px;background:#f1f1f1;"></div>
<div style="left:0px;top:680px;width:1279px;height:39px;background:linear-gradient(90deg,#223a44 0%,#22383f 40%,#20353f 61%,#1b2b3e 67%,#1a293e 100%);"></div>
<div style="left:48px;top:680px;width:344px;height:39px;background:#f2f2f2;border-top:1px solid #c9c9c9;"></div>
<svg style="left:16px;top:692px;" width="17" height="17" viewBox="0 0 17 17"><path d="M0 2.400l6.800-0.950v6.500H0zM7.700 1.300L16.500 0v7.950H7.700zM0 8.850h6.800v6.500L0 14.400zM7.700 8.850h8.800V16.800l-8.800-1.250z" fill="#fff"/></svg>
<svg style="left:59px;top:690px;" width="18" height="19" viewBox="0 0 18 19"><circle cx="11.300" cy="7.300" r="5.300" fill="none" stroke="#222" stroke-width="1.400"/><path d="M7.500 11.200L1.200 17.600" stroke="#222" stroke-width="1.500"/></svg>
<div class="t" style="left:88.5px;top:693px;font-size:14.5px;line-height:14.5px;color:#1e1e1e;transform:scaleX(1.0212);transform-origin:0 0;">Ketik di sini untuk mencari</div>
<svg style="left:407px;top:691px;" width="18" height="17" viewBox="0 0 18 17"><path d="M1.300 1v2.500h10.200V1M1.300 16v-2.500h10.200V16" fill="none" stroke="#fff" stroke-width="1.300"/><rect x="1.300" y="5.700" width="10.200" height="5.800" fill="none" stroke="#fff" stroke-width="1.300"/><path d="M15.500 1v3M15.500 9.200V16" stroke="#fff" stroke-width="1.400"/><rect x="14" y="5" width="3.200" height="3.200" fill="#fff"/></svg>
<svg style="left:454.5px;top:687.5px;" width="25" height="25" viewBox="0 0 25 25"><defs><linearGradient id="eg1" x1="0" y1="0" x2="0" y2="1"><stop offset="0" stop-color="#1b8fe0"/><stop offset="1" stop-color="#0a4f9e"/></linearGradient><linearGradient id="eg2" x1="0" y1="0.300" x2="1" y2="0.500"><stop offset="0" stop-color="#2bb6ee"/><stop offset="0.500" stop-color="#33c6cf"/><stop offset="1" stop-color="#6ade4a"/></linearGradient></defs><circle cx="12.500" cy="12.500" r="12" fill="url(#eg1)"/><path d="M0.600 11.400C1.200 5 6.400 0.500 12.600 0.500c6.600 0 11.900 5 11.900 10.800 0 3.600-2.800 5.800-6 5.800-2.200 0-3.600-0.900-3.600-2 0-0.800 0.900-1.300 0.900-2.800 0-2.300-2.200-4.300-5.400-4.300-4.400 0-8.200 2.400-9.800 3.400z" fill="url(#eg2)"/><path d="M10.400 8c-3.200 1-5.200 3.800-5.200 7 0 4.400 3.200 8.200 7.800 9.400 4 0 7.600-1.900 9.600-5-1.800 1.100-4.200 1.400-6.400 0.800-3.400-1-5.800-3.800-5.800-7.200 0-1.800 0.600-3.400 0-5z" fill="#0c59b2"/><circle cx="13.300" cy="12.300" r="2.300" fill="#1a3a48"/></svg>
<svg style="left:504.5px;top:690.5px;" width="23" height="19" viewBox="0 0 23 19"><path d="M0.500 2.200c0-1 0.600-1.600 1.600-1.600h5.600l2 2.200h12v3H0.500z" fill="#e9a923"/><rect x="0.500" y="4.600" width="22" height="13.600" rx="0.800" fill="#fbd75e"/><rect x="5" y="10.600" width="13" height="7.600" fill="#3f8fd8"/><rect x="8.200" y="14" width="6.600" height="4.200" fill="#fbd75e"/></svg>
<div style="left:495.7px;top:717px;width:32px;height:2px;background:#8cc3ee;"></div>
<div style="left:528.6px;top:717px;width:7.5px;height:2px;background:#6aa3d2;"></div>
<svg style="left:552.5px;top:688px;" width="24" height="24" viewBox="0 0 24 24"><path d="M7.500 7V5.200a4.500 4.500 0 0 1 9 0V7" fill="none" stroke="#f3f3f3" stroke-width="1.600"/><path d="M0.600 7h22.800v15.400a1.200 1.200 0 0 1-1.200 1.200H1.800a1.200 1.200 0 0 1-1.200-1.200z" fill="#f3f3f3"/><rect x="7.200" y="11.200" width="4.300" height="4.300" fill="#f25022"/><rect x="12.500" y="11.200" width="4.300" height="4.300" fill="#7fba00"/><rect x="7.200" y="16.500" width="4.300" height="4.300" fill="#00a4ef"/><rect x="12.500" y="16.500" width="4.300" height="4.300" fill="#ffb900"/></svg>
<svg style="left:601.5px;top:687.5px;" width="25" height="25" viewBox="0 0 25 25"><defs><radialGradient id="ff1" cx="0.700" cy="0.150" r="1"><stop offset="0" stop-color="#fff36a"/><stop offset="0.350" stop-color="#ff9a1f"/><stop offset="0.700" stop-color="#ff3647"/><stop offset="1" stop-color="#c7156f"/></radialGradient><radialGradient id="ff2" cx="0.500" cy="0.400" r="0.600"><stop offset="0" stop-color="#9059ff"/><stop offset="1" stop-color="#5b2bbd"/></radialGradient></defs><path d="M12.500 3c1-1.400 1.600-2.400 1.800-3 2.400 1.600 3.800 3.600 4.400 5.400 0.800-0.800 1.200-1.600 1.400-2.600 3 2.800 4.700 6.400 4.700 10 0 6.800-5.500 12-12.300 12S0.300 19.600 0.300 12.800c0-3 1-5.400 2.400-7.400 0 1 0.200 1.800 0.600 2.400C4.300 5.600 6.500 3.400 9.500 2.600c0 0.600 0.200 1.200 0.600 1.800 0.600-0.600 1.400-1 2.400-1.400z" fill="url(#ff1)"/><circle cx="12.800" cy="13.400" r="6" fill="url(#ff2)"/><path d="M3.400 12c2-2.600 5-3.200 7.400-2 1.400 0.800 2.600 0.600 3.800 0.200-0.600 1.600-2 2.600-3.800 2.600-1.200 0-2 0.800-1.600 2 0.600 1.600 2.600 2.400 4.800 2 2.400-0.400 4-2 4.800-3.800 1 4.600-2.200 9-7.400 9-5 0-8.600-4-8-10z" fill="#ff7a1c"/></svg>
<div style="left:594px;top:717px;width:40px;height:2px;background:#8cc3ee;"></div>
<svg style="left:652px;top:689.5px;" width="22" height="22" viewBox="0 0 22 22"><rect x="0" y="0" width="22" height="21.400" rx="3" fill="#273644"/><path d="M6.500 13.200l5.800-5.800 3.800 3.800-5.800 5.800z" fill="#43c6b5"/><path d="M9.300 4.800l2.200-2.200 2.800 2.800-2.200 2.200z" fill="#e6f2f2"/></svg>
<div style="left:642.7px;top:717px;width:40.5px;height:2px;background:#8cc3ee;"></div>
<svg style="left:700px;top:688.5px;" width="24" height="23" viewBox="0 0 24 23"><ellipse cx="11.800" cy="11.300" rx="11.300" ry="11" fill="#e0121e"/><ellipse cx="11.800" cy="11.300" rx="4.700" ry="8.200" fill="#20353f"/><path d="M16 3.200c2.400 1.800 3.800 4.800 3.800 8.100s-1.400 6.300-3.800 8.100c4-1.200 7-4.400 7-8.100s-3-6.900-7-8.100z" fill="#a30714"/></svg>
<svg style="left:748.5px;top:688px;" width="25" height="24" viewBox="0 0 25 24"><defs><radialGradient id="cg" cx="0.400" cy="0.300" r="0.800"><stop offset="0" stop-color="#a5d93a"/><stop offset="1" stop-color="#3f8f12"/></radialGradient></defs><circle cx="12.300" cy="12" r="12" fill="url(#cg)"/><path d="M3.200 9.800l3-2.600 12.400 11.400-3.400 3.400-8.800-5.200z" fill="#fff"/><path d="M6.400 12l7 7.200" stroke="#5aa51e" stroke-width="1.200"/><path d="M12.400 1.800c3 3.200 4.800 7.400 5 12M16.400 2.600c2 3 3 6.600 3 10.400M8.600 1.600c3.600 3.600 6 8 6.600 13" fill="none" stroke="#d9f0a8" stroke-width="0.700"/></svg>
<div style="left:741px;top:717px;width:40px;height:2px;background:#8cc3ee;"></div>
<div style="left:786px;top:680px;width:48px;height:39px;background:#475867;"></div>
<div style="left:786px;top:717px;width:48px;height:2px;background:#8cc3ee;"></div>
<svg style="left:798.5px;top:688.5px;" width="23" height="22" viewBox="0 0 23 22"><rect x="9.600" y="2.400" width="12.600" height="17" fill="#fff" stroke="#1e7145" stroke-width="0.800"/><path d="M13 5.200h3.200v2H13zM17.200 5.200h3.200v2h-3.200zM13 8.400h3.200v2H13zM17.200 8.400h3.200v2h-3.200zM13 11.600h3.200v2H13zM17.200 11.600h3.200v2h-3.200zM13 14.800h3.200v2H13zM17.200 14.800h3.200v2h-3.200z" fill="#1e7145"/><path d="M0 2.400L12.600 0v22L0 19.600z" fill="#1e7145"/><path d="M3.400 6.600h2l1.300 2.800 1.400-2.800h1.900l-2.300 4.200 2.400 4.400h-2l-1.500-3-1.500 3H3.200l2.400-4.400z" fill="#fff"/></svg>
<svg style="left:1031px;top:696.5px;" width="13" height="8" viewBox="0 0 13 8"><path d="M0.800 6.800L6.300 1.300l5.500 5.500" fill="none" stroke="#fff" stroke-width="1.500"/></svg>
<svg style="left:1053px;top:692px;" width="18" height="17" viewBox="0 0 18 17"><path d="M0.700 2.600l14.200-1.800v11.600L0.700 13.600z" fill="none" stroke="#fff" stroke-width="1.300"/><path d="M5.600 5.400h4.200v3.400M5.600 5.400l1.400-1.300M5.600 5.400l1.400 1.300M9.800 10H5.600" fill="none" stroke="#fff" stroke-width="1"/><circle cx="12.700" cy="12.600" r="3.600" fill="#ff8c00"/></svg>
<svg style="left:1080px;top:694px;" width="14" height="14" viewBox="0 0 14 14"><circle cx="11.200" cy="11.600" r="1.500" fill="#fff"/><path d="M6.600 13A4.800 4.800 0 0 1 11.400 8.200" fill="none" stroke="#fff" stroke-width="1.300"/><path d="M3.400 13A8 8 0 0 1 11.400 5" fill="none" stroke="#fff" stroke-width="1.300"/><path d="M0.600 12.400A10.800 10.800 0 0 1 12.400 1.600" fill="none" stroke="#cfd6dd" stroke-width="1.200"/></svg>
<svg style="left:1101px;top:692.5px;" width="18" height="15" viewBox="0 0 18 15"><path d="M0.700 5h2.800L7.200 1.600v11.800L3.500 10H0.700z" fill="none" stroke="#fff" stroke-width="1.200"/><path d="M9.400 5.200a3.400 3.400 0 0 1 0 4.600M11.600 3.200a6.200 6.200 0 0 1 0 8.600M13.800 1.200a9 9 0 0 1 0 12.600" fill="none" stroke="#fff" stroke-width="1.100"/></svg>
<div class="t" style="left:1129.5px;top:694px;font-size:12px;line-height:12px;color:#fff;transform:scaleX(0.9433);transform-origin:0 0;">IND</div>
<div class="t" style="left:1182px;top:685px;font-size:12px;line-height:12px;color:#fff;transform:scaleX(0.8776);transform-origin:0 0;">1:14</div>
<div style="left:1182.21px;top:694px;width:2.26px;height:1.3px;background:#1a293e;"></div>
<div style="left:1185.79px;top:694px;width:2.11px;height:1.3px;background:#1a293e;"></div>
<div style="left:1191.0px;top:694px;width:2.26px;height:1.3px;background:#1a293e;"></div>
<div style="left:1194.58px;top:694px;width:2.11px;height:1.3px;background:#1a293e;"></div>
<div class="t" style="left:1163px;top:703px;font-size:12px;line-height:12px;color:#fff;transform:scaleX(0.9490);transform-origin:0 0;">14/01/2021</div>
<div style="left:1163.23px;top:712px;width:2.45px;height:1.3px;background:#1a293e;"></div>
<div style="left:1167.1px;top:712px;width:2.28px;height:1.3px;background:#1a293e;"></div>
<div style="left:1185.4px;top:712px;width:2.45px;height:1.3px;background:#1a293e;"></div>
<div style="left:1189.27px;top:712px;width:2.28px;height:1.3px;background:#1a293e;"></div>
<div style="left:1213.9px;top:712px;width:2.45px;height:1.3px;background:#1a293e;"></div>
<div style="left:1217.77px;top:712px;width:2.28px;height:1.3px;background:#1a293e;"></div>
<svg style="left:1239px;top:692px;" width="18" height="14" viewBox="0 0 18 14"><path d="M0.500 0.500h15.500v10.200H6.500l-3 2.800v-2.800h-3z" fill="#fff"/><path d="M3 3.400h10.500M3 5.800h10.500M3 8.200h7" stroke="#1a293e" stroke-width="1"/></svg>
<div style="left:1247px;top:699.5px;width:16px;height:16px;background:#1f2733;border-radius:8px;border:1px solid #5b6470;"></div>
<div class="t" style="left:1252px;top:703px;font-size:11.5px;line-height:11.5px;color:#fff;transform:scaleX(1.0146);transform-origin:0 0;font-weight:700;">9</div>
<div class="t" style="left:991px;top:607px;font-size:19.5px;line-height:19.5px;color:rgba(140,140,140,0.62);transform:scaleX(1.0170);transform-origin:0 0;">Activate Windows</div>
<div class="t" style="left:991px;top:632px;font-size:14px;line-height:14px;color:rgba(140,140,140,0.6);transform:scaleX(1.0701);transform-origin:0 0;">Go to Settings to activate Windows.</div>
</body></html>
